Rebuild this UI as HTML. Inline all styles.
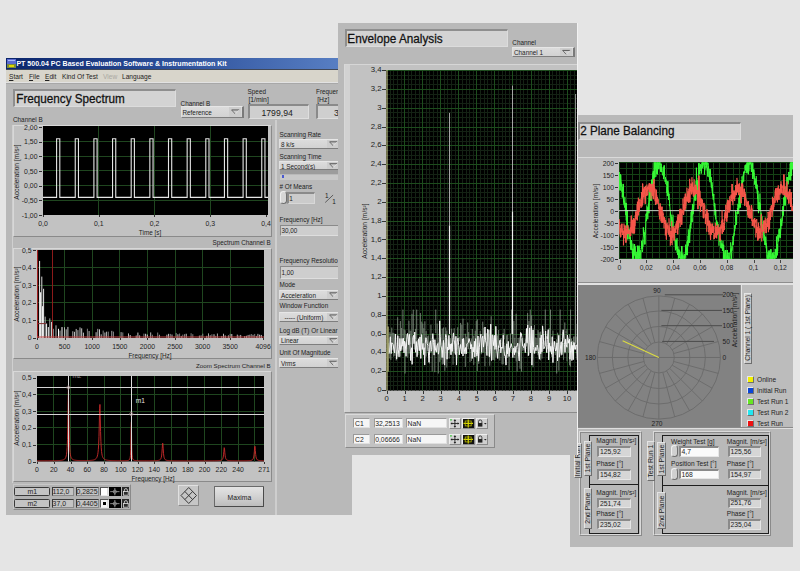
<!DOCTYPE html>
<html><head><meta charset="utf-8"><style>
html,body{margin:0;padding:0;}
body{width:800px;height:571px;overflow:hidden;position:relative;background:#e5e5e5;font-family:"Liberation Sans", sans-serif;}
.a{position:absolute;display:block;}
.t{position:absolute;white-space:nowrap;font-family:"Liberation Sans", sans-serif;}
u{text-decoration-thickness:0.7px;text-underline-offset:0.8px;}
</style></head><body>
<div class="a" style="left:6px;top:58px;width:346px;height:457px;background:#b9b9b9;"></div>
<div class="a" style="left:6px;top:58px;width:346px;height:11px;background:linear-gradient(90deg,#0a246a 0%,#2a4d98 45%,#5b82c6 100%);"></div>
<div class="a" style="left:7px;top:59px;width:9px;height:5px;background:#5a6ad0;"></div>
<div class="a" style="left:8px;top:60px;width:7px;height:1px;background:#a8b8f8;"></div>
<div class="a" style="left:7px;top:64px;width:9px;height:4px;background:#7c8a3a;"></div>
<div class="a" style="left:9px;top:65px;width:5px;height:2px;background:#dcd800;"></div>
<div class="t" style="left:16.40px;top:60.09px;font-size:7.05px;line-height:8.100px;color:#ffffff;font-weight:bold;">PT 500.04 PC Based Evaluation Software &amp; Instrumentation Kit</div>
<div class="a" style="left:6px;top:69px;width:346px;height:1px;background:#404858;"></div>
<div class="a" style="left:6px;top:70px;width:346px;height:12px;background:#d8d5cb;"></div>
<div class="t" style="left:9.00px;top:73.25px;font-size:6.6px;line-height:7.583px;color:#222;text-decoration-thickness:0.6px;"><u>S</u>tart</div>
<div class="t" style="left:29.00px;top:73.25px;font-size:6.6px;line-height:7.583px;color:#222;"><u>F</u>ile</div>
<div class="t" style="left:45.00px;top:73.25px;font-size:6.6px;line-height:7.583px;color:#222;"><u>E</u>dit</div>
<div class="t" style="left:62.00px;top:73.25px;font-size:6.6px;line-height:7.583px;color:#222;">Kind Of Test</div>
<div class="t" style="left:103.00px;top:73.25px;font-size:6.6px;line-height:7.583px;color:#aaa8a2;">View</div>
<div class="t" style="left:122.00px;top:73.25px;font-size:6.6px;line-height:7.583px;color:#222;">Language</div>
<div class="a" style="left:6px;top:82px;width:346px;height:1px;background:#e2e2e2;"></div>
<div class="a" style="left:6px;top:83px;width:346px;height:1px;background:#a8a8a8;"></div>
<div class="a" style="left:13px;top:89px;width:163px;height:17.5px;background:#d3d3d3;box-sizing:border-box;border-top:1px solid #8e8e8e;border-left:1px solid #8e8e8e;border-bottom:1px solid #dcdcdc;border-right:1px solid #dcdcdc;border-top-width:2px;border-left-width:2px;"></div>
<div class="t" style="left:16.30px;top:92.49px;font-size:11.7px;line-height:13.443px;color:#111;transform:scaleY(1.1);-webkit-text-stroke:0.25px #111;">Frequency Spectrum</div>
<div class="t" style="left:180.60px;top:99.69px;font-size:6.35px;line-height:7.296px;color:#1e1e1e;">Channel B</div>
<div class="a" style="left:180.5px;top:106px;width:63px;height:11.7px;box-sizing:border-box;background:linear-gradient(180deg,#dcdcdc,#d2d2d2);border-top:1px solid #e6e6e6;border-left:1px solid #e0e0e0;border-bottom:1px solid #7e7e7e;border-right:2px solid #7a7a7a;"></div>
<div class="a" style="left:229.0px;top:107px;width:12px;height:9.7px;background:#cdcdcd;"></div>
<svg class="a" style="left:229.0px;top:106px;" width="12" height="11.7" viewBox="0 0 12 11.7"><path d="M2.6 3.95 H10.2" stroke="#555" stroke-width="1"/><path d="M2.6 3.95 L6.3 8.05" stroke="#666" stroke-width="0.9"/><path d="M10.2 3.95 L6.3 8.05" stroke="#e2e2e2" stroke-width="0.8"/></svg>
<div class="t" style="left:182.50px;top:108.74px;font-size:6.35px;line-height:7.296px;color:#1e1e1e;">Reference</div>
<div class="t" style="left:247.60px;top:88.39px;font-size:6.35px;line-height:7.296px;color:#1e1e1e;">Speed</div>
<div class="t" style="left:248.40px;top:96.04px;font-size:6.8px;line-height:7.813px;color:#1e1e1e;">[1/min]</div>
<div class="a" style="left:247.5px;top:104.3px;width:61px;height:15px;background:#cfcfcf;box-sizing:border-box;border-top:1px solid #8a8a8a;border-left:1px solid #8a8a8a;border-bottom:1px solid #dedede;border-right:1px solid #dedede;border-top-width:2px;border-left-width:2px;"></div>
<div class="t" style="left:247.10px;width:60px;text-align:center;top:107.87px;font-size:8.7px;line-height:9.996px;color:#222;">1799,94</div>
<div class="t" style="left:316.00px;top:88.39px;font-size:6.35px;line-height:7.296px;color:#1e1e1e;">Frequen</div>
<div class="t" style="left:317.20px;top:96.04px;font-size:6.8px;line-height:7.813px;color:#1e1e1e;">[Hz]</div>
<div class="a" style="left:316px;top:104.3px;width:40px;height:15px;background:#cfcfcf;box-sizing:border-box;border-top:1px solid #8a8a8a;border-left:1px solid #8a8a8a;border-bottom:1px solid #dedede;border-right:1px solid #dedede;border-top-width:2px;border-left-width:2px;"></div>
<div class="t" style="left:334.00px;top:107.87px;font-size:8.7px;line-height:9.996px;color:#222;">3</div>
<div class="a" style="left:12px;top:124.5px;width:1px;height:358px;background:#d0d0d0;"></div>
<div class="a" style="left:13px;top:124.5px;width:258.5px;height:112px;background:#c2c2c2;box-sizing:border-box;border-top:1px solid #d8d8d8;border-left:1px solid #d8d8d8;border-bottom:1px solid #8a8a8a;border-right:1px solid #8a8a8a;"></div>
<svg class="a" style="left:43px;top:126px;" width="225" height="89" viewBox="0 0 225 89"><rect width="225" height="89" fill="#000"/><line x1="0" x2="225" y1="15.50" y2="15.50" stroke="#1f461f" stroke-width="1"/><line x1="0" x2="225" y1="30.50" y2="30.50" stroke="#1f461f" stroke-width="1"/><line x1="0" x2="225" y1="44.50" y2="44.50" stroke="#1f461f" stroke-width="1"/><line x1="0" x2="225" y1="59.50" y2="59.50" stroke="#1f461f" stroke-width="1"/><line x1="0" x2="225" y1="74.50" y2="74.50" stroke="#1f461f" stroke-width="1"/><line y1="0" y2="89" x1="55.50" x2="55.50" stroke="#1f461f" stroke-width="1"/><line y1="0" y2="89" x1="111.50" x2="111.50" stroke="#1f461f" stroke-width="1"/><line y1="0" y2="89" x1="167.50" x2="167.50" stroke="#1f461f" stroke-width="1"/><path d="M0.00 71.39 L13.60 71.39 L13.60 12.73 L16.80 12.73 L16.80 71.39 L32.25 71.39 L32.25 12.73 L35.45 12.73 L35.45 71.39 L50.90 71.39 L50.90 12.73 L54.10 12.73 L54.10 71.39 L69.55 71.39 L69.55 12.73 L72.75 12.73 L72.75 71.39 L88.20 71.39 L88.20 12.73 L91.40 12.73 L91.40 71.39 L106.85 71.39 L106.85 12.73 L110.05 12.73 L110.05 71.39 L125.50 71.39 L125.50 12.73 L128.70 12.73 L128.70 71.39 L144.15 71.39 L144.15 12.73 L147.35 12.73 L147.35 71.39 L162.80 71.39 L162.80 12.73 L166.00 12.73 L166.00 71.39 L181.45 71.39 L181.45 12.73 L184.65 12.73 L184.65 71.39 L200.10 71.39 L200.10 12.73 L203.30 12.73 L203.30 71.39 L218.75 71.39 L218.75 12.73 L221.95 12.73 L221.95 71.39 L225.00 71.39" fill="none" stroke="#e6e6e6" stroke-width="1.1"/></svg>
<div class="t" style="left:7.50px;width:30px;text-align:right;top:123.58px;font-size:6.9px;line-height:7.928px;color:#1e1e1e;">2,00</div>
<div class="a" style="left:38.5px;top:127px;width:3px;height:1px;background:#333;"></div>
<div class="t" style="left:7.50px;width:30px;text-align:right;top:138.24px;font-size:6.9px;line-height:7.928px;color:#1e1e1e;">1,50</div>
<div class="a" style="left:38.5px;top:142px;width:3px;height:1px;background:#333;"></div>
<div class="t" style="left:7.50px;width:30px;text-align:right;top:152.91px;font-size:6.9px;line-height:7.928px;color:#1e1e1e;">1,00</div>
<div class="a" style="left:38.5px;top:156px;width:3px;height:1px;background:#333;"></div>
<div class="t" style="left:7.50px;width:30px;text-align:right;top:167.57px;font-size:6.9px;line-height:7.928px;color:#1e1e1e;">0,50</div>
<div class="a" style="left:38.5px;top:171px;width:3px;height:1px;background:#333;"></div>
<div class="t" style="left:7.50px;width:30px;text-align:right;top:182.24px;font-size:6.9px;line-height:7.928px;color:#1e1e1e;">0,00</div>
<div class="a" style="left:38.5px;top:186px;width:3px;height:1px;background:#333;"></div>
<div class="t" style="left:7.50px;width:30px;text-align:right;top:196.90px;font-size:6.9px;line-height:7.928px;color:#1e1e1e;">-0,50</div>
<div class="a" style="left:38.5px;top:200px;width:3px;height:1px;background:#333;"></div>
<div class="t" style="left:7.50px;width:30px;text-align:right;top:211.57px;font-size:6.9px;line-height:7.928px;color:#1e1e1e;">-1,00</div>
<div class="a" style="left:38.5px;top:215px;width:3px;height:1px;background:#333;"></div>
<div class="t" style="left:28.00px;width:30px;text-align:center;top:219.88px;font-size:6.9px;line-height:7.928px;color:#1e1e1e;">0,0</div>
<div class="a" style="left:43px;top:215px;width:1px;height:2px;background:#333;"></div>
<div class="t" style="left:83.75px;width:30px;text-align:center;top:219.88px;font-size:6.9px;line-height:7.928px;color:#1e1e1e;">0,1</div>
<div class="a" style="left:99px;top:215px;width:1px;height:2px;background:#333;"></div>
<div class="t" style="left:139.50px;width:30px;text-align:center;top:219.88px;font-size:6.9px;line-height:7.928px;color:#1e1e1e;">0,2</div>
<div class="a" style="left:154px;top:215px;width:1px;height:2px;background:#333;"></div>
<div class="t" style="left:195.25px;width:30px;text-align:center;top:219.88px;font-size:6.9px;line-height:7.928px;color:#1e1e1e;">0,3</div>
<div class="a" style="left:210px;top:215px;width:1px;height:2px;background:#333;"></div>
<div class="t" style="left:251.00px;width:30px;text-align:center;top:219.88px;font-size:6.9px;line-height:7.928px;color:#1e1e1e;">0,4</div>
<div class="a" style="left:266px;top:215px;width:1px;height:2px;background:#333;"></div>
<div class="t" style="left:120.00px;width:60px;text-align:center;top:228.89px;font-size:6.35px;line-height:7.296px;color:#1e1e1e;">Time [s]</div>
<div class="t" style="left:13.00px;top:115.59px;font-size:6.35px;line-height:7.296px;color:#1e1e1e;">Channel B</div>
<div class="t" style="left:-83.20px;top:168.28px;width:200px;text-align:center;font-size:6.7px;line-height:8.04px;color:#1e1e1e;transform:rotate(-90deg);transform-origin:100px 4.02px;">Acceleration [m/s&#178;]</div>
<div class="a" style="left:275px;top:120px;width:2px;height:395px;background:#cecece;"></div>
<div class="t" style="left:150.70px;width:120px;text-align:right;top:238.52px;font-size:6.3px;line-height:7.239px;color:#1e1e1e;">Spectrum Channel  B</div>
<div class="a" style="left:13px;top:247.5px;width:258.5px;height:111px;background:#c2c2c2;box-sizing:border-box;border-top:1px solid #d8d8d8;border-left:1px solid #d8d8d8;border-bottom:1px solid #8a8a8a;border-right:1px solid #8a8a8a;"></div>
<svg class="a" style="left:37px;top:250px;" width="227" height="88" viewBox="0 0 227 88"><rect width="227" height="88" fill="#000"/><line x1="0" x2="227" y1="70.50" y2="70.50" stroke="#1f461f" stroke-width="1"/><line x1="0" x2="227" y1="52.50" y2="52.50" stroke="#1f461f" stroke-width="1"/><line x1="0" x2="227" y1="35.50" y2="35.50" stroke="#1f461f" stroke-width="1"/><line x1="0" x2="227" y1="17.50" y2="17.50" stroke="#1f461f" stroke-width="1"/><line y1="0" y2="88" x1="27.50" x2="27.50" stroke="#1f461f" stroke-width="1"/><line y1="0" y2="88" x1="55.50" x2="55.50" stroke="#1f461f" stroke-width="1"/><line y1="0" y2="88" x1="82.50" x2="82.50" stroke="#1f461f" stroke-width="1"/><line y1="0" y2="88" x1="110.50" x2="110.50" stroke="#1f461f" stroke-width="1"/><line y1="0" y2="88" x1="138.50" x2="138.50" stroke="#1f461f" stroke-width="1"/><line y1="0" y2="88" x1="165.50" x2="165.50" stroke="#1f461f" stroke-width="1"/><line y1="0" y2="88" x1="193.50" x2="193.50" stroke="#1f461f" stroke-width="1"/><line x1="2.6" x2="2.6" y1="88" y2="10.94" stroke="#f0f0f0" stroke-width="1"/><line x1="4.8" x2="4.8" y1="88" y2="26.60" stroke="#dcdcdc" stroke-width="1"/><line x1="6.6" x2="6.6" y1="88" y2="38.78" stroke="#e8e8e8" stroke-width="1"/><line x1="3.6" x2="3.6" y1="88" y2="42.26" stroke="#ffffff" stroke-width="1"/><line x1="5.6" x2="5.6" y1="88" y2="56.18" stroke="#ffffff" stroke-width="1"/><line x1="8.2" x2="8.2" y1="88" y2="66.62" stroke="#b0b0b0" stroke-width="1"/><line x1="9.6" x2="9.6" y1="88" y2="73.58" stroke="#ffffff" stroke-width="1"/><line x1="12.8" x2="12.8" y1="88" y2="68.36" stroke="#a8a8a8" stroke-width="1"/><line x1="14.5" x2="14.5" y1="88" y2="71.84" stroke="#c8c8c8" stroke-width="1"/><line x1="11.3" x2="11.3" y1="88" y2="77.06" stroke="#ffffff" stroke-width="1"/><line x1="16" x2="16" y1="88" y2="78.80" stroke="#ffffff" stroke-width="1"/><line x1="19" x2="19" y1="88" y2="75.32" stroke="#bbbbbb" stroke-width="1"/><line x1="21.5" x2="21.5" y1="88" y2="78.80" stroke="#ffffff" stroke-width="1"/><line x1="23" x2="23" y1="88" y2="80.54" stroke="#aaaaaa" stroke-width="1"/><line x1="25" x2="25" y1="88" y2="77.06" stroke="#ffffff" stroke-width="1"/><line x1="27.5" x2="27.5" y1="88" y2="77.24" stroke="#d8d8d8" stroke-width="0.8"/><line x1="29.2" x2="29.2" y1="88" y2="79.33" stroke="#e8e8e8" stroke-width="0.8"/><line x1="30.9" x2="30.9" y1="88" y2="76.93" stroke="#ffffff" stroke-width="0.8"/><line x1="35.8" x2="35.8" y1="88" y2="81.25" stroke="#d8d8d8" stroke-width="0.8"/><line x1="37.5" x2="37.5" y1="88" y2="81.81" stroke="#e8e8e8" stroke-width="0.8"/><line x1="39.2" x2="39.2" y1="88" y2="78.94" stroke="#e8e8e8" stroke-width="0.8"/><line x1="40.9" x2="40.9" y1="88" y2="80.12" stroke="#d8d8d8" stroke-width="0.8"/><line x1="43.0" x2="43.0" y1="88" y2="77.40" stroke="#e8e8e8" stroke-width="0.8"/><line x1="44.7" x2="44.7" y1="88" y2="78.34" stroke="#ffffff" stroke-width="0.8"/><line x1="46.4" x2="46.4" y1="88" y2="82.63" stroke="#ffffff" stroke-width="0.8"/><line x1="50.4" x2="50.4" y1="88" y2="78.71" stroke="#a0a0a0" stroke-width="0.8"/><line x1="52.1" x2="52.1" y1="88" y2="81.04" stroke="#e8e8e8" stroke-width="0.8"/><line x1="59.1" x2="59.1" y1="88" y2="82.20" stroke="#e8e8e8" stroke-width="0.8"/><line x1="60.8" x2="60.8" y1="88" y2="78.83" stroke="#d8d8d8" stroke-width="0.8"/><line x1="62.5" x2="62.5" y1="88" y2="79.34" stroke="#ffffff" stroke-width="0.8"/><line x1="64.2" x2="64.2" y1="88" y2="84.33" stroke="#e8e8e8" stroke-width="0.8"/><line x1="66.2" x2="66.2" y1="88" y2="80.57" stroke="#a0a0a0" stroke-width="0.8"/><line x1="67.9" x2="67.9" y1="88" y2="82.51" stroke="#e8e8e8" stroke-width="0.8"/><line x1="69.6" x2="69.6" y1="88" y2="81.68" stroke="#e8e8e8" stroke-width="0.8"/><line x1="71.3" x2="71.3" y1="88" y2="81.63" stroke="#a0a0a0" stroke-width="0.8"/><line x1="74.8" x2="74.8" y1="88" y2="80.83" stroke="#d8d8d8" stroke-width="0.8"/><line x1="76.5" x2="76.5" y1="88" y2="81.61" stroke="#a0a0a0" stroke-width="0.8"/><line x1="84.1" x2="84.1" y1="88" y2="82.09" stroke="#d8d8d8" stroke-width="0.8"/><line x1="85.8" x2="85.8" y1="88" y2="82.45" stroke="#a0a0a0" stroke-width="0.8"/><line x1="91.5" x2="91.5" y1="88" y2="83.41" stroke="#e8e8e8" stroke-width="0.8"/><line x1="93.2" x2="93.2" y1="88" y2="85.05" stroke="#ffffff" stroke-width="0.8"/><line x1="99.2" x2="99.2" y1="88" y2="85.47" stroke="#e8e8e8" stroke-width="0.8"/><line x1="100.9" x2="100.9" y1="88" y2="82.55" stroke="#ffffff" stroke-width="0.8"/><line x1="102.6" x2="102.6" y1="88" y2="85.38" stroke="#ffffff" stroke-width="0.8"/><line x1="106.9" x2="106.9" y1="88" y2="83.63" stroke="#a0a0a0" stroke-width="0.8"/><line x1="108.6" x2="108.6" y1="88" y2="83.79" stroke="#ffffff" stroke-width="0.8"/><line x1="110.3" x2="110.3" y1="88" y2="84.52" stroke="#ffffff" stroke-width="0.8"/><line x1="113.7" x2="113.7" y1="88" y2="82.40" stroke="#e8e8e8" stroke-width="0.8"/><line x1="115.4" x2="115.4" y1="88" y2="84.71" stroke="#a0a0a0" stroke-width="0.8"/><line x1="120.7" x2="120.7" y1="88" y2="82.51" stroke="#a0a0a0" stroke-width="0.8"/><line x1="122.4" x2="122.4" y1="88" y2="84.75" stroke="#d8d8d8" stroke-width="0.8"/><line x1="129.9" x2="129.9" y1="88" y2="84.68" stroke="#e8e8e8" stroke-width="0.8"/><line x1="131.6" x2="131.6" y1="88" y2="83.82" stroke="#ffffff" stroke-width="0.8"/><line x1="133.3" x2="133.3" y1="88" y2="83.90" stroke="#a0a0a0" stroke-width="0.8"/><line x1="135.0" x2="135.0" y1="88" y2="84.51" stroke="#d8d8d8" stroke-width="0.8"/><line x1="139.2" x2="139.2" y1="88" y2="82.95" stroke="#a0a0a0" stroke-width="0.8"/><line x1="140.9" x2="140.9" y1="88" y2="84.27" stroke="#ffffff" stroke-width="0.8"/><line x1="142.6" x2="142.6" y1="88" y2="83.53" stroke="#a0a0a0" stroke-width="0.8"/><line x1="144.3" x2="144.3" y1="88" y2="85.90" stroke="#d8d8d8" stroke-width="0.8"/><line x1="145.8" x2="145.8" y1="88" y2="84.60" stroke="#a0a0a0" stroke-width="0.8"/><line x1="147.5" x2="147.5" y1="88" y2="84.17" stroke="#a0a0a0" stroke-width="0.8"/><line x1="149.2" x2="149.2" y1="88" y2="83.78" stroke="#ffffff" stroke-width="0.8"/><line x1="154.1" x2="154.1" y1="88" y2="83.23" stroke="#a0a0a0" stroke-width="0.8"/><line x1="155.8" x2="155.8" y1="88" y2="84.21" stroke="#a0a0a0" stroke-width="0.8"/><line x1="162.4" x2="162.4" y1="88" y2="85.57" stroke="#d8d8d8" stroke-width="0.8"/><line x1="164.1" x2="164.1" y1="88" y2="85.18" stroke="#a0a0a0" stroke-width="0.8"/><line x1="165.8" x2="165.8" y1="88" y2="83.67" stroke="#a0a0a0" stroke-width="0.8"/><line x1="169.8" x2="169.8" y1="88" y2="85.81" stroke="#ffffff" stroke-width="0.8"/><line x1="171.5" x2="171.5" y1="88" y2="83.38" stroke="#d8d8d8" stroke-width="0.8"/><line x1="173.2" x2="173.2" y1="88" y2="85.23" stroke="#d8d8d8" stroke-width="0.8"/><line x1="174.9" x2="174.9" y1="88" y2="84.27" stroke="#a0a0a0" stroke-width="0.8"/><line x1="177.0" x2="177.0" y1="88" y2="84.26" stroke="#ffffff" stroke-width="0.8"/><line x1="178.7" x2="178.7" y1="88" y2="85.84" stroke="#a0a0a0" stroke-width="0.8"/><line x1="180.4" x2="180.4" y1="88" y2="83.51" stroke="#d8d8d8" stroke-width="0.8"/><line x1="184.8" x2="184.8" y1="88" y2="85.93" stroke="#d8d8d8" stroke-width="0.8"/><line x1="186.5" x2="186.5" y1="88" y2="83.74" stroke="#e8e8e8" stroke-width="0.8"/><line x1="188.2" x2="188.2" y1="88" y2="85.41" stroke="#ffffff" stroke-width="0.8"/><line x1="191.4" x2="191.4" y1="88" y2="85.31" stroke="#d8d8d8" stroke-width="0.8"/><line x1="193.1" x2="193.1" y1="88" y2="83.84" stroke="#a0a0a0" stroke-width="0.8"/><line x1="194.8" x2="194.8" y1="88" y2="83.99" stroke="#ffffff" stroke-width="0.8"/><line x1="200.3" x2="200.3" y1="88" y2="84.61" stroke="#e8e8e8" stroke-width="0.8"/><line x1="202.0" x2="202.0" y1="88" y2="85.40" stroke="#a0a0a0" stroke-width="0.8"/><line x1="203.7" x2="203.7" y1="88" y2="84.94" stroke="#e8e8e8" stroke-width="0.8"/><line x1="207.7" x2="207.7" y1="88" y2="86.09" stroke="#e8e8e8" stroke-width="0.8"/><line x1="209.4" x2="209.4" y1="88" y2="85.77" stroke="#ffffff" stroke-width="0.8"/><line x1="211.1" x2="211.1" y1="88" y2="84.93" stroke="#e8e8e8" stroke-width="0.8"/><line x1="212.8" x2="212.8" y1="88" y2="84.71" stroke="#d8d8d8" stroke-width="0.8"/><line x1="214.3" x2="214.3" y1="88" y2="84.01" stroke="#a0a0a0" stroke-width="0.8"/><line x1="216.0" x2="216.0" y1="88" y2="84.77" stroke="#d8d8d8" stroke-width="0.8"/><line x1="217.7" x2="217.7" y1="88" y2="83.94" stroke="#a0a0a0" stroke-width="0.8"/><line x1="219.4" x2="219.4" y1="88" y2="85.88" stroke="#d8d8d8" stroke-width="0.8"/><line x1="220.9" x2="220.9" y1="88" y2="83.87" stroke="#e8e8e8" stroke-width="0.8"/><line x1="222.6" x2="222.6" y1="88" y2="84.70" stroke="#ffffff" stroke-width="0.8"/><line x1="224.3" x2="224.3" y1="88" y2="84.95" stroke="#ffffff" stroke-width="0.8"/><line x1="0.5" x2="0.5" y1="0" y2="88" stroke="#a02020" stroke-width="1.2"/><line x1="15.5" x2="15.5" y1="0" y2="88" stroke="#8c1a1a" stroke-width="1"/><line x1="0" x2="227" y1="87" y2="87" stroke="#c84848" stroke-width="1"/><line x1="1" x2="9" y1="73.6" y2="73.6" stroke="#803030" stroke-width="1"/></svg>
<div class="t" style="left:1.50px;width:30px;text-align:right;top:247.08px;font-size:6.9px;line-height:7.928px;color:#1e1e1e;">0,5</div>
<div class="a" style="left:32.5px;top:250px;width:3px;height:1px;background:#333;"></div>
<div class="t" style="left:1.50px;width:30px;text-align:right;top:264.48px;font-size:6.9px;line-height:7.928px;color:#1e1e1e;">0,4</div>
<div class="a" style="left:32.5px;top:268px;width:3px;height:1px;background:#333;"></div>
<div class="t" style="left:1.50px;width:30px;text-align:right;top:281.88px;font-size:6.9px;line-height:7.928px;color:#1e1e1e;">0,3</div>
<div class="a" style="left:32.5px;top:285px;width:3px;height:1px;background:#333;"></div>
<div class="t" style="left:1.50px;width:30px;text-align:right;top:299.28px;font-size:6.9px;line-height:7.928px;color:#1e1e1e;">0,2</div>
<div class="a" style="left:32.5px;top:303px;width:3px;height:1px;background:#333;"></div>
<div class="t" style="left:1.50px;width:30px;text-align:right;top:316.68px;font-size:6.9px;line-height:7.928px;color:#1e1e1e;">0,1</div>
<div class="a" style="left:32.5px;top:320px;width:3px;height:1px;background:#333;"></div>
<div class="t" style="left:1.50px;width:30px;text-align:right;top:334.08px;font-size:6.9px;line-height:7.928px;color:#1e1e1e;">0</div>
<div class="a" style="left:32.5px;top:338px;width:3px;height:1px;background:#333;"></div>
<div class="t" style="left:17.00px;width:40px;text-align:center;top:342.58px;font-size:6.9px;line-height:7.928px;color:#1e1e1e;">0</div>
<div class="a" style="left:37px;top:338px;width:1px;height:2px;background:#333;"></div>
<div class="t" style="left:44.60px;width:40px;text-align:center;top:342.58px;font-size:6.9px;line-height:7.928px;color:#1e1e1e;">500</div>
<div class="a" style="left:65px;top:338px;width:1px;height:2px;background:#333;"></div>
<div class="t" style="left:72.20px;width:40px;text-align:center;top:342.58px;font-size:6.9px;line-height:7.928px;color:#1e1e1e;">1000</div>
<div class="a" style="left:92px;top:338px;width:1px;height:2px;background:#333;"></div>
<div class="t" style="left:99.80px;width:40px;text-align:center;top:342.58px;font-size:6.9px;line-height:7.928px;color:#1e1e1e;">1500</div>
<div class="a" style="left:120px;top:338px;width:1px;height:2px;background:#333;"></div>
<div class="t" style="left:127.40px;width:40px;text-align:center;top:342.58px;font-size:6.9px;line-height:7.928px;color:#1e1e1e;">2000</div>
<div class="a" style="left:147px;top:338px;width:1px;height:2px;background:#333;"></div>
<div class="t" style="left:155.00px;width:40px;text-align:center;top:342.58px;font-size:6.9px;line-height:7.928px;color:#1e1e1e;">2500</div>
<div class="a" style="left:175px;top:338px;width:1px;height:2px;background:#333;"></div>
<div class="t" style="left:182.60px;width:40px;text-align:center;top:342.58px;font-size:6.9px;line-height:7.928px;color:#1e1e1e;">3000</div>
<div class="a" style="left:203px;top:338px;width:1px;height:2px;background:#333;"></div>
<div class="t" style="left:210.20px;width:40px;text-align:center;top:342.58px;font-size:6.9px;line-height:7.928px;color:#1e1e1e;">3500</div>
<div class="a" style="left:230px;top:338px;width:1px;height:2px;background:#333;"></div>
<div class="t" style="left:243.10px;width:40px;text-align:center;top:342.58px;font-size:6.9px;line-height:7.928px;color:#1e1e1e;">4096</div>
<div class="a" style="left:263px;top:338px;width:1px;height:2px;background:#333;"></div>
<div class="t" style="left:110.00px;width:80px;text-align:center;top:351.89px;font-size:6.35px;line-height:7.296px;color:#1e1e1e;">Frequency [Hz]</div>
<div class="t" style="left:-83.20px;top:289.98px;width:200px;text-align:center;font-size:6.7px;line-height:8.04px;color:#1e1e1e;transform:rotate(-90deg);transform-origin:100px 4.02px;">Acceleration [m/s&#178;]</div>
<div class="t" style="left:130.70px;width:140px;text-align:right;top:361.77px;font-size:6.2px;line-height:7.124px;color:#1e1e1e;">Zoom Spectrum Channel B</div>
<div class="a" style="left:13px;top:371px;width:258.5px;height:111px;background:#c2c2c2;box-sizing:border-box;border-top:1px solid #d8d8d8;border-left:1px solid #d8d8d8;border-bottom:1px solid #8a8a8a;border-right:1px solid #8a8a8a;"></div>
<svg class="a" style="left:37px;top:376px;" width="227" height="85.5" viewBox="0 0 227 85.5"><rect width="227" height="85.5" fill="#000"/><line x1="0" x2="227" y1="68.50" y2="68.50" stroke="#1f461f" stroke-width="1"/><line x1="0" x2="227" y1="51.50" y2="51.50" stroke="#1f461f" stroke-width="1"/><line x1="0" x2="227" y1="35.50" y2="35.50" stroke="#1f461f" stroke-width="1"/><line x1="0" x2="227" y1="18.50" y2="18.50" stroke="#1f461f" stroke-width="1"/><line y1="0" y2="85.5" x1="16.50" x2="16.50" stroke="#1f461f" stroke-width="1"/><line y1="0" y2="85.5" x1="33.50" x2="33.50" stroke="#1f461f" stroke-width="1"/><line y1="0" y2="85.5" x1="50.50" x2="50.50" stroke="#1f461f" stroke-width="1"/><line y1="0" y2="85.5" x1="67.50" x2="67.50" stroke="#1f461f" stroke-width="1"/><line y1="0" y2="85.5" x1="83.50" x2="83.50" stroke="#1f461f" stroke-width="1"/><line y1="0" y2="85.5" x1="100.50" x2="100.50" stroke="#1f461f" stroke-width="1"/><line y1="0" y2="85.5" x1="117.50" x2="117.50" stroke="#1f461f" stroke-width="1"/><line y1="0" y2="85.5" x1="134.50" x2="134.50" stroke="#1f461f" stroke-width="1"/><line y1="0" y2="85.5" x1="150.50" x2="150.50" stroke="#1f461f" stroke-width="1"/><line y1="0" y2="85.5" x1="167.50" x2="167.50" stroke="#1f461f" stroke-width="1"/><line y1="0" y2="85.5" x1="184.50" x2="184.50" stroke="#1f461f" stroke-width="1"/><line y1="0" y2="85.5" x1="201.50" x2="201.50" stroke="#1f461f" stroke-width="1"/><line y1="0" y2="85.5" x1="217.50" x2="217.50" stroke="#1f461f" stroke-width="1"/><path d="M0.00 84.79 L0.32 84.79 L0.65 84.79 L0.97 84.79 L1.30 84.79 L1.62 84.79 L1.95 84.79 L2.27 84.79 L2.60 84.79 L2.92 84.79 L3.24 84.79 L3.57 84.78 L3.89 84.78 L4.22 84.78 L4.54 84.78 L4.87 84.78 L5.19 84.78 L5.52 84.78 L5.84 84.78 L6.16 84.78 L6.49 84.78 L6.81 84.77 L7.14 84.77 L7.46 84.77 L7.79 84.77 L8.11 84.77 L8.44 84.77 L8.76 84.77 L9.08 84.76 L9.41 84.76 L9.73 84.76 L10.06 84.76 L10.38 84.76 L10.71 84.76 L11.03 84.75 L11.35 84.75 L11.68 84.75 L12.00 84.75 L12.33 84.74 L12.65 84.74 L12.98 84.74 L13.30 84.74 L13.63 84.73 L13.95 84.73 L14.27 84.73 L14.60 84.72 L14.92 84.72 L15.25 84.71 L15.57 84.71 L15.90 84.71 L16.22 84.70 L16.55 84.70 L16.87 84.69 L17.19 84.69 L17.52 84.68 L17.84 84.67 L18.17 84.67 L18.49 84.66 L18.82 84.65 L19.14 84.64 L19.47 84.63 L19.79 84.62 L20.11 84.61 L20.44 84.60 L20.76 84.58 L21.09 84.57 L21.41 84.55 L21.74 84.54 L22.06 84.52 L22.39 84.50 L22.71 84.47 L23.03 84.45 L23.36 84.42 L23.68 84.38 L24.01 84.35 L24.33 84.30 L24.66 84.25 L24.98 84.20 L25.31 84.13 L25.63 84.05 L25.95 83.96 L26.28 83.85 L26.60 83.72 L26.93 83.56 L27.25 83.37 L27.58 83.12 L27.90 82.81 L28.23 82.40 L28.55 81.84 L28.87 81.09 L29.20 80.00 L29.52 78.38 L29.85 75.82 L30.17 71.51 L30.50 63.72 L30.82 48.95 L31.14 24.60 L31.47 11.29 L31.79 31.81 L32.12 53.94 L32.44 66.35 L32.77 72.93 L33.09 76.64 L33.42 78.88 L33.74 80.33 L34.06 81.31 L34.39 82.00 L34.71 82.50 L35.04 82.88 L35.36 83.18 L35.69 83.41 L36.01 83.59 L36.34 83.74 L36.66 83.86 L36.98 83.96 L37.31 84.05 L37.63 84.12 L37.96 84.18 L38.28 84.23 L38.61 84.28 L38.93 84.32 L39.26 84.35 L39.58 84.38 L39.90 84.41 L40.23 84.43 L40.55 84.46 L40.88 84.47 L41.20 84.49 L41.53 84.51 L41.85 84.52 L42.18 84.53 L42.50 84.54 L42.82 84.55 L43.15 84.56 L43.47 84.56 L43.80 84.57 L44.12 84.57 L44.45 84.58 L44.77 84.58 L45.10 84.59 L45.42 84.59 L45.74 84.59 L46.07 84.59 L46.39 84.59 L46.72 84.59 L47.04 84.59 L47.37 84.59 L47.69 84.59 L48.02 84.58 L48.34 84.58 L48.66 84.58 L48.99 84.57 L49.31 84.57 L49.64 84.56 L49.96 84.56 L50.29 84.55 L50.61 84.54 L50.93 84.53 L51.26 84.52 L51.58 84.51 L51.91 84.49 L52.23 84.48 L52.56 84.46 L52.88 84.44 L53.21 84.42 L53.53 84.40 L53.85 84.37 L54.18 84.35 L54.50 84.31 L54.83 84.28 L55.15 84.23 L55.48 84.19 L55.80 84.13 L56.13 84.07 L56.45 84.00 L56.77 83.92 L57.10 83.82 L57.42 83.70 L57.75 83.56 L58.07 83.40 L58.40 83.19 L58.72 82.94 L59.05 82.63 L59.37 82.23 L59.69 81.70 L60.02 81.01 L60.34 80.05 L60.67 78.70 L60.99 76.71 L61.32 73.67 L61.64 68.79 L61.97 60.75 L62.29 47.99 L62.61 32.76 L62.94 28.45 L63.26 40.85 L63.59 55.59 L63.91 65.64 L64.24 71.75 L64.56 75.50 L64.89 77.90 L65.21 79.50 L65.53 80.62 L65.86 81.42 L66.18 82.02 L66.51 82.47 L66.83 82.82 L67.16 83.10 L67.48 83.32 L67.80 83.51 L68.13 83.66 L68.45 83.78 L68.78 83.89 L69.10 83.98 L69.43 84.06 L69.75 84.13 L70.08 84.19 L70.40 84.24 L70.72 84.28 L71.05 84.32 L71.37 84.36 L71.70 84.39 L72.02 84.42 L72.35 84.44 L72.67 84.47 L73.00 84.49 L73.32 84.51 L73.64 84.52 L73.97 84.54 L74.29 84.55 L74.62 84.57 L74.94 84.58 L75.27 84.59 L75.59 84.60 L75.92 84.61 L76.24 84.62 L76.56 84.63 L76.89 84.63 L77.21 84.64 L77.54 84.65 L77.86 84.65 L78.19 84.66 L78.51 84.66 L78.84 84.67 L79.16 84.67 L79.48 84.68 L79.81 84.68 L80.13 84.68 L80.46 84.69 L80.78 84.69 L81.11 84.69 L81.43 84.69 L81.76 84.70 L82.08 84.70 L82.40 84.70 L82.73 84.70 L83.05 84.70 L83.38 84.70 L83.70 84.70 L84.03 84.70 L84.35 84.70 L84.68 84.70 L85.00 84.70 L85.32 84.70 L85.65 84.70 L85.97 84.69 L86.30 84.69 L86.62 84.69 L86.95 84.68 L87.27 84.68 L87.59 84.67 L87.92 84.66 L88.24 84.65 L88.57 84.64 L88.89 84.63 L89.22 84.61 L89.54 84.59 L89.87 84.56 L90.19 84.53 L90.51 84.49 L90.84 84.43 L91.16 84.36 L91.49 84.26 L91.81 84.12 L92.14 83.91 L92.46 83.58 L92.79 83.02 L93.11 81.97 L93.43 79.67 L93.76 73.29 L94.08 51.80 L94.41 45.75 L94.73 71.07 L95.06 78.98 L95.38 81.69 L95.71 82.88 L96.03 83.50 L96.35 83.86 L96.68 84.09 L97.00 84.25 L97.33 84.35 L97.65 84.43 L97.98 84.49 L98.30 84.54 L98.63 84.57 L98.95 84.60 L99.27 84.62 L99.60 84.64 L99.92 84.66 L100.25 84.67 L100.57 84.68 L100.90 84.69 L101.22 84.70 L101.55 84.71 L101.87 84.72 L102.19 84.72 L102.52 84.73 L102.84 84.73 L103.17 84.73 L103.49 84.74 L103.82 84.74 L104.14 84.74 L104.47 84.75 L104.79 84.75 L105.11 84.75 L105.44 84.75 L105.76 84.75 L106.09 84.75 L106.41 84.76 L106.74 84.76 L107.06 84.76 L107.38 84.76 L107.71 84.76 L108.03 84.76 L108.36 84.76 L108.68 84.76 L109.01 84.76 L109.33 84.76 L109.66 84.76 L109.98 84.76 L110.30 84.76 L110.63 84.76 L110.95 84.76 L111.28 84.75 L111.60 84.75 L111.93 84.75 L112.25 84.75 L112.58 84.75 L112.90 84.75 L113.22 84.75 L113.55 84.74 L113.87 84.74 L114.20 84.74 L114.52 84.73 L114.85 84.73 L115.17 84.73 L115.50 84.72 L115.82 84.72 L116.14 84.71 L116.47 84.71 L116.79 84.70 L117.12 84.69 L117.44 84.68 L117.77 84.67 L118.09 84.66 L118.42 84.65 L118.74 84.64 L119.06 84.62 L119.39 84.60 L119.71 84.58 L120.04 84.55 L120.36 84.52 L120.69 84.48 L121.01 84.44 L121.34 84.38 L121.66 84.31 L121.98 84.23 L122.31 84.11 L122.63 83.97 L122.96 83.77 L123.28 83.49 L123.61 83.09 L123.93 82.49 L124.26 81.54 L124.58 79.94 L124.90 77.14 L125.23 72.45 L125.55 67.18 L125.88 67.54 L126.20 72.96 L126.53 77.47 L126.85 80.13 L127.17 81.65 L127.50 82.56 L127.82 83.14 L128.15 83.52 L128.47 83.79 L128.80 83.98 L129.12 84.13 L129.45 84.24 L129.77 84.32 L130.09 84.39 L130.42 84.45 L130.74 84.49 L131.07 84.53 L131.39 84.56 L131.72 84.59 L132.04 84.61 L132.37 84.63 L132.69 84.64 L133.01 84.66 L133.34 84.67 L133.66 84.68 L133.99 84.69 L134.31 84.70 L134.64 84.71 L134.96 84.72 L135.29 84.72 L135.61 84.73 L135.93 84.73 L136.26 84.74 L136.58 84.74 L136.91 84.75 L137.23 84.75 L137.56 84.76 L137.88 84.76 L138.21 84.76 L138.53 84.76 L138.85 84.77 L139.18 84.77 L139.50 84.77 L139.83 84.77 L140.15 84.77 L140.48 84.78 L140.80 84.78 L141.13 84.78 L141.45 84.78 L141.77 84.78 L142.10 84.78 L142.42 84.79 L142.75 84.79 L143.07 84.79 L143.40 84.79 L143.72 84.79 L144.05 84.79 L144.37 84.79 L144.69 84.79 L145.02 84.79 L145.34 84.79 L145.67 84.79 L145.99 84.79 L146.32 84.80 L146.64 84.80 L146.96 84.80 L147.29 84.80 L147.61 84.80 L147.94 84.80 L148.26 84.80 L148.59 84.80 L148.91 84.80 L149.24 84.80 L149.56 84.80 L149.88 84.80 L150.21 84.80 L150.53 84.80 L150.86 84.80 L151.18 84.80 L151.51 84.80 L151.83 84.80 L152.16 84.80 L152.48 84.80 L152.80 84.80 L153.13 84.80 L153.45 84.80 L153.78 84.80 L154.10 84.80 L154.43 84.80 L154.75 84.80 L155.08 84.80 L155.40 84.80 L155.72 84.80 L156.05 84.80 L156.37 84.80 L156.70 84.80 L157.02 84.80 L157.35 84.80 L157.67 84.80 L158.00 84.80 L158.32 84.80 L158.64 84.80 L158.97 84.80 L159.29 84.80 L159.62 84.80 L159.94 84.80 L160.27 84.80 L160.59 84.80 L160.92 84.80 L161.24 84.80 L161.56 84.80 L161.89 84.80 L162.21 84.80 L162.54 84.80 L162.86 84.80 L163.19 84.80 L163.51 84.80 L163.83 84.80 L164.16 84.80 L164.48 84.80 L164.81 84.80 L165.13 84.80 L165.46 84.80 L165.78 84.80 L166.11 84.80 L166.43 84.80 L166.75 84.80 L167.08 84.80 L167.40 84.80 L167.73 84.80 L168.05 84.80 L168.38 84.80 L168.70 84.80 L169.03 84.80 L169.35 84.80 L169.67 84.80 L170.00 84.80 L170.32 84.80 L170.65 84.79 L170.97 84.79 L171.30 84.79 L171.62 84.79 L171.95 84.79 L172.27 84.79 L172.59 84.79 L172.92 84.79 L173.24 84.79 L173.57 84.78 L173.89 84.78 L174.22 84.78 L174.54 84.78 L174.87 84.78 L175.19 84.78 L175.51 84.77 L175.84 84.77 L176.16 84.77 L176.49 84.76 L176.81 84.76 L177.14 84.76 L177.46 84.75 L177.79 84.75 L178.11 84.75 L178.43 84.74 L178.76 84.73 L179.08 84.73 L179.41 84.72 L179.73 84.71 L180.06 84.70 L180.38 84.69 L180.71 84.68 L181.03 84.66 L181.35 84.65 L181.68 84.63 L182.00 84.60 L182.33 84.58 L182.65 84.54 L182.98 84.50 L183.30 84.45 L183.62 84.38 L183.95 84.30 L184.27 84.18 L184.60 84.03 L184.92 83.82 L185.25 83.51 L185.57 83.05 L185.90 82.30 L186.22 81.04 L186.54 78.83 L186.87 75.21 L187.19 71.66 L187.52 72.74 L187.84 76.78 L188.17 79.84 L188.49 81.61 L188.82 82.63 L189.14 83.25 L189.46 83.64 L189.79 83.91 L190.11 84.10 L190.44 84.23 L190.76 84.33 L191.09 84.41 L191.41 84.47 L191.74 84.51 L192.06 84.55 L192.38 84.58 L192.71 84.61 L193.03 84.63 L193.36 84.65 L193.68 84.66 L194.01 84.68 L194.33 84.69 L194.66 84.70 L194.98 84.71 L195.30 84.72 L195.63 84.72 L195.95 84.73 L196.28 84.73 L196.60 84.74 L196.93 84.74 L197.25 84.75 L197.58 84.75 L197.90 84.75 L198.22 84.76 L198.55 84.76 L198.87 84.76 L199.20 84.76 L199.52 84.76 L199.85 84.76 L200.17 84.77 L200.50 84.77 L200.82 84.77 L201.14 84.77 L201.47 84.77 L201.79 84.77 L202.12 84.77 L202.44 84.77 L202.77 84.77 L203.09 84.77 L203.41 84.77 L203.74 84.77 L204.06 84.77 L204.39 84.77 L204.71 84.76 L205.04 84.76 L205.36 84.76 L205.69 84.76 L206.01 84.76 L206.33 84.76 L206.66 84.75 L206.98 84.75 L207.31 84.75 L207.63 84.75 L207.96 84.74 L208.28 84.74 L208.61 84.73 L208.93 84.73 L209.25 84.72 L209.58 84.71 L209.90 84.71 L210.23 84.70 L210.55 84.69 L210.88 84.68 L211.20 84.66 L211.53 84.65 L211.85 84.63 L212.17 84.61 L212.50 84.58 L212.82 84.55 L213.15 84.52 L213.47 84.47 L213.80 84.42 L214.12 84.35 L214.45 84.26 L214.77 84.15 L215.09 83.99 L215.42 83.77 L215.74 83.46 L216.07 83.00 L216.39 82.27 L216.72 81.05 L217.04 78.93 L217.37 75.31 L217.69 70.83 L218.01 70.28 L218.34 74.52 L218.66 78.42 L218.99 80.76 L219.31 82.10 L219.64 82.90 L219.96 83.40 L220.29 83.73 L220.61 83.96 L220.93 84.12 L221.26 84.25 L221.58 84.34 L221.91 84.41 L222.23 84.47 L222.56 84.52 L222.88 84.55 L223.20 84.58 L223.53 84.61 L223.85 84.63 L224.18 84.65 L224.50 84.67 L224.83 84.68 L225.15 84.69 L225.48 84.70 L225.80 84.71 L226.12 84.72 L226.45 84.73 L226.77 84.74 L227.10 84.74" fill="none" stroke="#c42a2a" stroke-width="0.95"/><line x1="0" x2="227" y1="38.5" y2="38.5" stroke="#d4d4d4" stroke-width="1"/><line x1="94.5" x2="94.5" y1="0" y2="85.5" stroke="#dcdcdc" stroke-width="1"/><circle cx="94.3" cy="38.0" r="1.6" fill="none" stroke="#a08080" stroke-width="0.8"/><line x1="0" x2="227" y1="11.5" y2="11.5" stroke="#d4d4d4" stroke-width="1"/><line x1="31.5" x2="31.5" y1="0" y2="85.5" stroke="#dcdcdc" stroke-width="1"/><circle cx="31.4" cy="11.5" r="1.6" fill="none" stroke="#a08080" stroke-width="0.8"/><text x="98.8" y="26.5" font-size="6.5" fill="#e8e8e8" font-family="Liberation Sans">m1</text><text x="35.4" y="1.5" font-size="6.5" fill="#909090" font-family="Liberation Sans">m2</text></svg>
<div class="t" style="left:1.50px;width:30px;text-align:right;top:374.08px;font-size:6.9px;line-height:7.928px;color:#1e1e1e;">0,5</div>
<div class="a" style="left:32.5px;top:378px;width:3px;height:1px;background:#333;"></div>
<div class="t" style="left:1.50px;width:30px;text-align:right;top:390.88px;font-size:6.9px;line-height:7.928px;color:#1e1e1e;">0,4</div>
<div class="a" style="left:32.5px;top:394px;width:3px;height:1px;background:#333;"></div>
<div class="t" style="left:1.50px;width:30px;text-align:right;top:407.68px;font-size:6.9px;line-height:7.928px;color:#1e1e1e;">0,3</div>
<div class="a" style="left:32.5px;top:411px;width:3px;height:1px;background:#333;"></div>
<div class="t" style="left:1.50px;width:30px;text-align:right;top:424.48px;font-size:6.9px;line-height:7.928px;color:#1e1e1e;">0,2</div>
<div class="a" style="left:32.5px;top:428px;width:3px;height:1px;background:#333;"></div>
<div class="t" style="left:1.50px;width:30px;text-align:right;top:441.28px;font-size:6.9px;line-height:7.928px;color:#1e1e1e;">0,1</div>
<div class="a" style="left:32.5px;top:445px;width:3px;height:1px;background:#333;"></div>
<div class="t" style="left:1.50px;width:30px;text-align:right;top:458.08px;font-size:6.9px;line-height:7.928px;color:#1e1e1e;">0</div>
<div class="a" style="left:32.5px;top:462px;width:3px;height:1px;background:#333;"></div>
<div class="t" style="left:22.00px;width:30px;text-align:center;top:466.08px;font-size:6.9px;line-height:7.928px;color:#1e1e1e;">0</div>
<div class="a" style="left:37px;top:462px;width:1px;height:2px;background:#333;"></div>
<div class="t" style="left:38.76px;width:30px;text-align:center;top:466.08px;font-size:6.9px;line-height:7.928px;color:#1e1e1e;">20</div>
<div class="a" style="left:54px;top:462px;width:1px;height:2px;background:#333;"></div>
<div class="t" style="left:55.52px;width:30px;text-align:center;top:466.08px;font-size:6.9px;line-height:7.928px;color:#1e1e1e;">40</div>
<div class="a" style="left:71px;top:462px;width:1px;height:2px;background:#333;"></div>
<div class="t" style="left:72.28px;width:30px;text-align:center;top:466.08px;font-size:6.9px;line-height:7.928px;color:#1e1e1e;">60</div>
<div class="a" style="left:87px;top:462px;width:1px;height:2px;background:#333;"></div>
<div class="t" style="left:89.04px;width:30px;text-align:center;top:466.08px;font-size:6.9px;line-height:7.928px;color:#1e1e1e;">80</div>
<div class="a" style="left:104px;top:462px;width:1px;height:2px;background:#333;"></div>
<div class="t" style="left:105.80px;width:30px;text-align:center;top:466.08px;font-size:6.9px;line-height:7.928px;color:#1e1e1e;">100</div>
<div class="a" style="left:121px;top:462px;width:1px;height:2px;background:#333;"></div>
<div class="t" style="left:122.56px;width:30px;text-align:center;top:466.08px;font-size:6.9px;line-height:7.928px;color:#1e1e1e;">120</div>
<div class="a" style="left:138px;top:462px;width:1px;height:2px;background:#333;"></div>
<div class="t" style="left:139.32px;width:30px;text-align:center;top:466.08px;font-size:6.9px;line-height:7.928px;color:#1e1e1e;">140</div>
<div class="a" style="left:154px;top:462px;width:1px;height:2px;background:#333;"></div>
<div class="t" style="left:156.08px;width:30px;text-align:center;top:466.08px;font-size:6.9px;line-height:7.928px;color:#1e1e1e;">160</div>
<div class="a" style="left:171px;top:462px;width:1px;height:2px;background:#333;"></div>
<div class="t" style="left:172.84px;width:30px;text-align:center;top:466.08px;font-size:6.9px;line-height:7.928px;color:#1e1e1e;">180</div>
<div class="a" style="left:188px;top:462px;width:1px;height:2px;background:#333;"></div>
<div class="t" style="left:189.60px;width:30px;text-align:center;top:466.08px;font-size:6.9px;line-height:7.928px;color:#1e1e1e;">200</div>
<div class="a" style="left:205px;top:462px;width:1px;height:2px;background:#333;"></div>
<div class="t" style="left:206.36px;width:30px;text-align:center;top:466.08px;font-size:6.9px;line-height:7.928px;color:#1e1e1e;">220</div>
<div class="a" style="left:221px;top:462px;width:1px;height:2px;background:#333;"></div>
<div class="t" style="left:223.12px;width:30px;text-align:center;top:466.08px;font-size:6.9px;line-height:7.928px;color:#1e1e1e;">240</div>
<div class="a" style="left:238px;top:462px;width:1px;height:2px;background:#333;"></div>
<div class="t" style="left:249.10px;width:30px;text-align:center;top:466.08px;font-size:6.9px;line-height:7.928px;color:#1e1e1e;">271</div>
<div class="a" style="left:264px;top:462px;width:1px;height:2px;background:#333;"></div>
<div class="t" style="left:113.00px;width:80px;text-align:center;top:474.89px;font-size:6.35px;line-height:7.296px;color:#1e1e1e;">Frequency [Hz]</div>
<div class="t" style="left:-83.20px;top:413.98px;width:200px;text-align:center;font-size:6.7px;line-height:8.04px;color:#1e1e1e;transform:rotate(-90deg);transform-origin:100px 4.02px;">Acceleration [m/s&#178;]</div>
<div class="a" style="left:13px;top:484px;width:117.5px;height:26px;background:#b2b2b2;box-sizing:border-box;border-top:1px solid #c8c8c8;border-left:1px solid #c8c8c8;border-bottom:1px solid #8a8a8a;border-right:1px solid #8a8a8a;"></div>
<div class="a" style="left:14.3px;top:487.0px;width:36.2px;height:9.3px;background:#c4c4c4;box-sizing:border-box;border-top:1px solid #3a3a3a;border-left:1px solid #3a3a3a;border-bottom:1px solid #3a3a3a;border-right:1px solid #3a3a3a;border-radius:1.5px;"></div>
<div class="t" style="left:17.40px;width:30px;text-align:center;top:488.18px;font-size:6.9px;line-height:7.928px;color:#1e1e1e;">m1</div>
<div class="a" style="left:51.8px;top:487.0px;width:22.7px;height:9.3px;background:#c4c4c4;box-sizing:border-box;border-top:1px solid #3a3a3a;border-left:1px solid #3a3a3a;border-bottom:1px solid #8a8a8a;border-right:1px solid #8a8a8a;"></div>
<div class="t" style="left:52.60px;top:488.18px;font-size:6.9px;line-height:7.928px;color:#1e1e1e;">112,0</div>
<div class="a" style="left:76px;top:487.0px;width:22.8px;height:9.3px;background:#c4c4c4;box-sizing:border-box;border-top:1px solid #3a3a3a;border-left:1px solid #3a3a3a;border-bottom:1px solid #8a8a8a;border-right:1px solid #8a8a8a;"></div>
<div class="t" style="left:76.40px;top:488.18px;font-size:6.9px;line-height:7.928px;color:#1e1e1e;">0,2825</div>
<div class="a" style="left:100px;top:487.0px;width:8.7px;height:9.3px;background:#dcdcdc;box-sizing:border-box;border-top:1px solid #555;border-left:1px solid #555;border-bottom:1px solid #e8e8e8;border-right:1px solid #e8e8e8;"></div>
<div class="a" style="left:101.3px;top:488.4px;width:6px;height:6.4px;background:#ffffff;"></div>
<div class="a" style="left:109.3px;top:487.0px;width:11.7px;height:9.3px;background:#000;"></div>
<svg class="a" style="left:109.3px;top:487.0px;" width="11.7" height="9.3" viewBox="0 0 11.7 9.3"><path d="M5.85 1 V8.3 M1.2 4.65 H10.5" stroke="#8a8a8a" stroke-width="1"/><circle cx="5.85" cy="4.65" r="1.6" fill="none" stroke="#9a9a9a" stroke-width="0.8"/></svg>
<div class="a" style="left:121.7px;top:487.0px;width:7.8px;height:9.3px;background:#2a2a2a;"></div>
<svg class="a" style="left:121.7px;top:487.0px;" width="7.8" height="9.3" viewBox="0 0 7.8 9.3"><path d="M2.4 4.6 V3.1 A1.5 1.5 0 0 1 5.4 3.1 V4.6" fill="none" stroke="#e0e0e0" stroke-width="0.8"/><rect x="1.6" y="4.6" width="4.6" height="3.6" fill="none" stroke="#e0e0e0" stroke-width="0.8"/></svg>
<div class="a" style="left:14.3px;top:498.8px;width:36.2px;height:9.3px;background:#c4c4c4;box-sizing:border-box;border-top:1px solid #3a3a3a;border-left:1px solid #3a3a3a;border-bottom:1px solid #3a3a3a;border-right:1px solid #3a3a3a;border-radius:1.5px;"></div>
<div class="t" style="left:17.40px;width:30px;text-align:center;top:499.98px;font-size:6.9px;line-height:7.928px;color:#1e1e1e;">m2</div>
<div class="a" style="left:51.8px;top:498.8px;width:22.7px;height:9.3px;background:#c4c4c4;box-sizing:border-box;border-top:1px solid #3a3a3a;border-left:1px solid #3a3a3a;border-bottom:1px solid #8a8a8a;border-right:1px solid #8a8a8a;"></div>
<div class="t" style="left:52.60px;top:499.98px;font-size:6.9px;line-height:7.928px;color:#1e1e1e;">37,0</div>
<div class="a" style="left:76px;top:498.8px;width:22.8px;height:9.3px;background:#c4c4c4;box-sizing:border-box;border-top:1px solid #3a3a3a;border-left:1px solid #3a3a3a;border-bottom:1px solid #8a8a8a;border-right:1px solid #8a8a8a;"></div>
<div class="t" style="left:76.40px;top:499.98px;font-size:6.9px;line-height:7.928px;color:#1e1e1e;">0,4405</div>
<div class="a" style="left:100px;top:498.8px;width:8.7px;height:9.3px;background:#dcdcdc;box-sizing:border-box;border-top:1px solid #555;border-left:1px solid #555;border-bottom:1px solid #e8e8e8;border-right:1px solid #e8e8e8;"></div>
<div class="a" style="left:101.3px;top:500.2px;width:6px;height:6.4px;background:#f4f4f4;"></div>
<div class="a" style="left:102.6px;top:501.5px;width:3.4px;height:3.6px;background:#000;"></div>
<div class="a" style="left:109.3px;top:498.8px;width:11.7px;height:9.3px;background:#000;"></div>
<svg class="a" style="left:109.3px;top:498.8px;" width="11.7" height="9.3" viewBox="0 0 11.7 9.3"><path d="M5.85 1 V8.3 M1.2 4.65 H10.5" stroke="#8a8a8a" stroke-width="1"/><circle cx="5.85" cy="4.65" r="1.6" fill="none" stroke="#9a9a9a" stroke-width="0.8"/></svg>
<div class="a" style="left:121.7px;top:498.8px;width:7.8px;height:9.3px;background:#2a2a2a;"></div>
<svg class="a" style="left:121.7px;top:498.8px;" width="7.8" height="9.3" viewBox="0 0 7.8 9.3"><path d="M2.4 4.6 V3.1 A1.5 1.5 0 0 1 5.4 3.1 V4.6" fill="none" stroke="#e0e0e0" stroke-width="0.8"/><rect x="1.6" y="4.6" width="4.6" height="3.6" fill="none" stroke="#e0e0e0" stroke-width="0.8"/></svg>
<div class="a" style="left:177.5px;top:484.5px;width:21.5px;height:21px;background:#c6c6c6;box-sizing:border-box;border-top:1px solid #e0e0e0;border-left:1px solid #e0e0e0;border-bottom:1px solid #8a8a8a;border-right:1px solid #8a8a8a;"></div>
<svg class="a" style="left:177.5px;top:484.5px;" width="21.5" height="21" viewBox="0 0 21.5 21"><path d="M10.75 2.5 L18.5 10.5 L10.75 18.5 L3 10.5 Z M6.9 6.5 L14.6 14.5 M14.6 6.5 L6.9 14.5" fill="none" stroke="#3a3a3a" stroke-width="1"/></svg>
<div class="a" style="left:214.3px;top:486.3px;width:50.2px;height:21.2px;background:None;box-sizing:border-box;border-top:1px solid #6a6a6a;border-left:1px solid #6a6a6a;border-bottom:1px solid #4a4a4a;border-right:1px solid #4a4a4a;background:linear-gradient(180deg,#e4e4e4 0%,#d2d2d2 50%,#bdbdbd 100%);border-radius:1px;"></div>
<div class="t" style="left:214.40px;width:50px;text-align:center;top:493.64px;font-size:6.8px;line-height:7.813px;color:#1e1e1e;">Maxima</div>
<div class="t" style="left:279.50px;top:130.89px;font-size:6.35px;line-height:7.296px;color:#1e1e1e;">Scanning Rate</div>
<div class="a" style="left:279px;top:139px;width:62px;height:9.5px;box-sizing:border-box;background:linear-gradient(180deg,#dcdcdc,#d2d2d2);border-top:1px solid #e6e6e6;border-left:1px solid #e0e0e0;border-bottom:1px solid #7e7e7e;border-right:2px solid #7a7a7a;"></div>
<div class="a" style="left:326.5px;top:140px;width:12px;height:7.5px;background:#cdcdcd;"></div>
<svg class="a" style="left:326.5px;top:139px;" width="12" height="9.5" viewBox="0 0 12 9.5"><path d="M2.6 2.85 H10.2" stroke="#555" stroke-width="1"/><path d="M2.6 2.85 L6.3 6.95" stroke="#666" stroke-width="0.9"/><path d="M10.2 2.85 L6.3 6.95" stroke="#e2e2e2" stroke-width="0.8"/></svg>
<div class="t" style="left:281.00px;top:140.64px;font-size:6.35px;line-height:7.296px;color:#1e1e1e;">8 k/s</div>
<div class="t" style="left:279.50px;top:153.39px;font-size:6.35px;line-height:7.296px;color:#1e1e1e;">Scanning Time</div>
<div class="a" style="left:279px;top:161.2px;width:62px;height:9.3px;box-sizing:border-box;background:linear-gradient(180deg,#dcdcdc,#d2d2d2);border-top:1px solid #e6e6e6;border-left:1px solid #e0e0e0;border-bottom:1px solid #7e7e7e;border-right:2px solid #7a7a7a;"></div>
<div class="a" style="left:326.5px;top:162.2px;width:12px;height:7.300000000000001px;background:#cdcdcd;"></div>
<svg class="a" style="left:326.5px;top:161.2px;" width="12" height="9.3" viewBox="0 0 12 9.3"><path d="M2.6 2.75 H10.2" stroke="#555" stroke-width="1"/><path d="M2.6 2.75 L6.3 6.85" stroke="#666" stroke-width="0.9"/><path d="M10.2 2.75 L6.3 6.85" stroke="#e2e2e2" stroke-width="0.8"/></svg>
<div class="t" style="left:281.00px;top:162.74px;font-size:6.35px;line-height:7.296px;color:#1e1e1e;">1 Second(s)</div>
<div class="a" style="left:280px;top:170.3px;width:60px;height:4.2px;background:#9c9c9c;"></div>
<div class="a" style="left:280px;top:174.5px;width:60px;height:5px;background:#c8c8c8;"></div>
<div class="a" style="left:281.5px;top:175px;width:2px;height:3px;background:#4a5ad0;"></div>
<div class="t" style="left:279.50px;top:182.89px;font-size:6.35px;line-height:7.296px;color:#1e1e1e;"># Of Means</div>
<div class="a" style="left:286.7px;top:192px;width:28px;height:12.3px;background:#cbcbcb;box-sizing:border-box;border-top:1px solid #8a8a8a;border-left:1px solid #8a8a8a;border-bottom:1px solid #d8d8d8;border-right:1px solid #d8d8d8;border-top-width:2px;border-left-width:2px;"></div>
<div class="a" style="left:280px;top:191.1px;width:6.7px;height:13.2px;background:#d6d6d6;box-sizing:border-box;border-top:1px solid #eeeeee;border-left:1px solid #eeeeee;border-bottom:1px solid #707070;border-right:1px solid #707070;border-radius:3.3px;"></div>
<div class="t" style="left:289.30px;top:195.49px;font-size:6.35px;line-height:7.296px;color:#1e1e1e;">1</div>
<div class="t" style="left:325.00px;top:191.89px;font-size:6.35px;line-height:7.296px;color:#1e1e1e;">1</div>
<div class="t" style="left:332.20px;top:198.09px;font-size:6.35px;line-height:7.296px;color:#1e1e1e;">1</div>
<svg class="a" style="left:322px;top:190px;" width="14" height="14" viewBox="0 0 14 14"><line x1="3.2" y1="12.5" x2="11.1" y2="5" stroke="#333" stroke-width="0.7"/></svg>
<div class="t" style="left:279.50px;top:215.69px;font-size:6.35px;line-height:7.296px;color:#1e1e1e;">Frequency [Hz]</div>
<div class="a" style="left:279.5px;top:224.5px;width:62px;height:11.5px;background:#cecece;box-sizing:border-box;border-top:1px solid #8a8a8a;border-left:1px solid #8a8a8a;border-bottom:1px solid #dedede;border-right:1px solid #dedede;"></div>
<div class="t" style="left:281.50px;top:227.19px;font-size:6.35px;line-height:7.296px;color:#1e1e1e;">30,00</div>
<div class="t" style="left:279.50px;top:256.89px;font-size:6.35px;line-height:7.296px;color:#1e1e1e;">Frequency Resolutio</div>
<div class="a" style="left:279.5px;top:266px;width:62px;height:12.5px;background:#cecece;box-sizing:border-box;border-top:1px solid #8a8a8a;border-left:1px solid #8a8a8a;border-bottom:1px solid #dedede;border-right:1px solid #dedede;"></div>
<div class="t" style="left:281.50px;top:269.19px;font-size:6.35px;line-height:7.296px;color:#1e1e1e;">1,00</div>
<div class="t" style="left:279.50px;top:281.39px;font-size:6.35px;line-height:7.296px;color:#1e1e1e;">Mode</div>
<div class="a" style="left:279px;top:290px;width:62px;height:9.5px;box-sizing:border-box;background:linear-gradient(180deg,#dcdcdc,#d2d2d2);border-top:1px solid #e6e6e6;border-left:1px solid #e0e0e0;border-bottom:1px solid #7e7e7e;border-right:2px solid #7a7a7a;"></div>
<div class="a" style="left:326.5px;top:291px;width:12px;height:7.5px;background:#cdcdcd;"></div>
<svg class="a" style="left:326.5px;top:290px;" width="12" height="9.5" viewBox="0 0 12 9.5"><path d="M2.6 2.85 H10.2" stroke="#555" stroke-width="1"/><path d="M2.6 2.85 L6.3 6.95" stroke="#666" stroke-width="0.9"/><path d="M10.2 2.85 L6.3 6.95" stroke="#e2e2e2" stroke-width="0.8"/></svg>
<div class="t" style="left:281.00px;top:291.64px;font-size:6.35px;line-height:7.296px;color:#1e1e1e;">Acceleration</div>
<div class="t" style="left:279.50px;top:301.89px;font-size:6.35px;line-height:7.296px;color:#1e1e1e;">Window Function</div>
<div class="a" style="left:279px;top:312.3px;width:62px;height:9.7px;box-sizing:border-box;background:linear-gradient(180deg,#dcdcdc,#d2d2d2);border-top:1px solid #e6e6e6;border-left:1px solid #e0e0e0;border-bottom:1px solid #7e7e7e;border-right:2px solid #7a7a7a;"></div>
<div class="a" style="left:326.5px;top:313.3px;width:12px;height:7.699999999999999px;background:#cdcdcd;"></div>
<svg class="a" style="left:326.5px;top:312.3px;" width="12" height="9.7" viewBox="0 0 12 9.7"><path d="M2.6 2.95 H10.2" stroke="#555" stroke-width="1"/><path d="M2.6 2.95 L6.3 7.05" stroke="#666" stroke-width="0.9"/><path d="M10.2 2.95 L6.3 7.05" stroke="#e2e2e2" stroke-width="0.8"/></svg>
<div class="t" style="left:281.00px;top:314.04px;font-size:6.35px;line-height:7.296px;color:#1e1e1e;"></div>
<div class="t" style="left:284.50px;top:314.09px;font-size:6.35px;line-height:7.296px;color:#1e1e1e;">----- (Uniform)</div>
<div class="t" style="left:279.50px;top:326.89px;font-size:6.35px;line-height:7.296px;color:#1e1e1e;">Log dB (T) Or Linear</div>
<div class="a" style="left:279px;top:335.8px;width:62px;height:9.3px;box-sizing:border-box;background:linear-gradient(180deg,#dcdcdc,#d2d2d2);border-top:1px solid #e6e6e6;border-left:1px solid #e0e0e0;border-bottom:1px solid #7e7e7e;border-right:2px solid #7a7a7a;"></div>
<div class="a" style="left:326.5px;top:336.8px;width:12px;height:7.300000000000001px;background:#cdcdcd;"></div>
<svg class="a" style="left:326.5px;top:335.8px;" width="12" height="9.3" viewBox="0 0 12 9.3"><path d="M2.6 2.75 H10.2" stroke="#555" stroke-width="1"/><path d="M2.6 2.75 L6.3 6.85" stroke="#666" stroke-width="0.9"/><path d="M10.2 2.75 L6.3 6.85" stroke="#e2e2e2" stroke-width="0.8"/></svg>
<div class="t" style="left:281.00px;top:337.34px;font-size:6.35px;line-height:7.296px;color:#1e1e1e;">Linear</div>
<div class="t" style="left:279.50px;top:349.39px;font-size:6.35px;line-height:7.296px;color:#1e1e1e;">Unit Of Magnitude</div>
<div class="a" style="left:279px;top:357.5px;width:62px;height:10.3px;box-sizing:border-box;background:linear-gradient(180deg,#dcdcdc,#d2d2d2);border-top:1px solid #e6e6e6;border-left:1px solid #e0e0e0;border-bottom:1px solid #7e7e7e;border-right:2px solid #7a7a7a;"></div>
<div class="a" style="left:326.5px;top:358.5px;width:12px;height:8.3px;background:#cdcdcd;"></div>
<svg class="a" style="left:326.5px;top:357.5px;" width="12" height="10.3" viewBox="0 0 12 10.3"><path d="M2.6 3.25 H10.2" stroke="#555" stroke-width="1"/><path d="M2.6 3.25 L6.3 7.35" stroke="#666" stroke-width="0.9"/><path d="M10.2 3.25 L6.3 7.35" stroke="#e2e2e2" stroke-width="0.8"/></svg>
<div class="t" style="left:281.00px;top:359.54px;font-size:6.35px;line-height:7.296px;color:#1e1e1e;">Vrms</div>
<div class="a" style="left:570px;top:115px;width:223px;height:432px;background:#b9b9b9;"></div>
<div class="a" style="left:578px;top:121.6px;width:162.5px;height:18.2px;background:#d3d3d3;box-sizing:border-box;border-top:1px solid #8e8e8e;border-left:1px solid #8e8e8e;border-bottom:1px solid #dcdcdc;border-right:1px solid #dcdcdc;border-top-width:2px;border-left-width:2px;"></div>
<div class="t" style="left:580.20px;top:124.49px;font-size:11.7px;line-height:13.443px;color:#111;transform:scaleY(1.1);-webkit-text-stroke:0.25px #111;">2 Plane Balancing</div>
<div class="a" style="left:578px;top:156.5px;width:215px;height:1px;background:#dadada;"></div>
<div class="a" style="left:578px;top:157.5px;width:215px;height:124.5px;background:#c0c0c0;"></div>
<div class="a" style="left:578px;top:282px;width:215px;height:1px;background:#8e8e8e;"></div>
<div class="a" style="left:578px;top:283px;width:215px;height:1.5px;background:#e2e2e2;"></div>
<svg class="a" style="left:619px;top:162px;" width="174" height="97" viewBox="0 0 174 97"><rect width="174" height="97" fill="#000"/><line x1="0" x2="174" y1="0.50" y2="0.50" stroke="#154215" stroke-width="1"/><line x1="0" x2="174" y1="6.50" y2="6.50" stroke="#154215" stroke-width="1"/><line x1="0" x2="174" y1="12.50" y2="12.50" stroke="#154215" stroke-width="1"/><line x1="0" x2="174" y1="18.50" y2="18.50" stroke="#154215" stroke-width="1"/><line x1="0" x2="174" y1="24.50" y2="24.50" stroke="#154215" stroke-width="1"/><line x1="0" x2="174" y1="30.50" y2="30.50" stroke="#154215" stroke-width="1"/><line x1="0" x2="174" y1="36.50" y2="36.50" stroke="#154215" stroke-width="1"/><line x1="0" x2="174" y1="42.50" y2="42.50" stroke="#154215" stroke-width="1"/><line x1="0" x2="174" y1="48.50" y2="48.50" stroke="#154215" stroke-width="1"/><line x1="0" x2="174" y1="54.50" y2="54.50" stroke="#154215" stroke-width="1"/><line x1="0" x2="174" y1="60.50" y2="60.50" stroke="#154215" stroke-width="1"/><line x1="0" x2="174" y1="66.50" y2="66.50" stroke="#154215" stroke-width="1"/><line x1="0" x2="174" y1="72.50" y2="72.50" stroke="#154215" stroke-width="1"/><line x1="0" x2="174" y1="78.50" y2="78.50" stroke="#154215" stroke-width="1"/><line x1="0" x2="174" y1="84.50" y2="84.50" stroke="#154215" stroke-width="1"/><line x1="0" x2="174" y1="90.50" y2="90.50" stroke="#154215" stroke-width="1"/><line x1="0" x2="174" y1="96.50" y2="96.50" stroke="#154215" stroke-width="1"/><line y1="0" y2="97" x1="0.50" x2="0.50" stroke="#154215" stroke-width="1"/><line y1="0" y2="97" x1="7.50" x2="7.50" stroke="#154215" stroke-width="1"/><line y1="0" y2="97" x1="13.50" x2="13.50" stroke="#154215" stroke-width="1"/><line y1="0" y2="97" x1="20.50" x2="20.50" stroke="#154215" stroke-width="1"/><line y1="0" y2="97" x1="27.50" x2="27.50" stroke="#154215" stroke-width="1"/><line y1="0" y2="97" x1="33.50" x2="33.50" stroke="#154215" stroke-width="1"/><line y1="0" y2="97" x1="40.50" x2="40.50" stroke="#154215" stroke-width="1"/><line y1="0" y2="97" x1="47.50" x2="47.50" stroke="#154215" stroke-width="1"/><line y1="0" y2="97" x1="53.50" x2="53.50" stroke="#154215" stroke-width="1"/><line y1="0" y2="97" x1="60.50" x2="60.50" stroke="#154215" stroke-width="1"/><line y1="0" y2="97" x1="67.50" x2="67.50" stroke="#154215" stroke-width="1"/><line y1="0" y2="97" x1="74.50" x2="74.50" stroke="#154215" stroke-width="1"/><line y1="0" y2="97" x1="80.50" x2="80.50" stroke="#154215" stroke-width="1"/><line y1="0" y2="97" x1="87.50" x2="87.50" stroke="#154215" stroke-width="1"/><line y1="0" y2="97" x1="94.50" x2="94.50" stroke="#154215" stroke-width="1"/><line y1="0" y2="97" x1="100.50" x2="100.50" stroke="#154215" stroke-width="1"/><line y1="0" y2="97" x1="107.50" x2="107.50" stroke="#154215" stroke-width="1"/><line y1="0" y2="97" x1="114.50" x2="114.50" stroke="#154215" stroke-width="1"/><line y1="0" y2="97" x1="120.50" x2="120.50" stroke="#154215" stroke-width="1"/><line y1="0" y2="97" x1="127.50" x2="127.50" stroke="#154215" stroke-width="1"/><line y1="0" y2="97" x1="134.50" x2="134.50" stroke="#154215" stroke-width="1"/><line y1="0" y2="97" x1="141.50" x2="141.50" stroke="#154215" stroke-width="1"/><line y1="0" y2="97" x1="147.50" x2="147.50" stroke="#154215" stroke-width="1"/><line y1="0" y2="97" x1="154.50" x2="154.50" stroke="#154215" stroke-width="1"/><line y1="0" y2="97" x1="161.50" x2="161.50" stroke="#154215" stroke-width="1"/><line y1="0" y2="97" x1="167.50" x2="167.50" stroke="#154215" stroke-width="1"/><line y1="0" y2="97" x1="174.50" x2="174.50" stroke="#154215" stroke-width="1"/><path d="M0.00 18.23L0.20 18.06M0.45 9.99L0.65 26.44M0.90 16.66L1.10 28.39M1.35 12.05L1.55 17.03M1.80 13.04L2.00 23.36M2.25 20.87L2.45 24.67M2.70 29.80L2.90 24.89M3.15 35.39L3.35 30.38M3.60 27.34L3.80 30.88M4.05 36.34L4.25 21.91M4.50 36.65L4.70 40.23M4.95 39.05L5.15 42.84M5.40 45.07L5.60 44.88M5.85 34.72L6.05 45.83M6.30 48.01L6.50 45.25M6.75 40.82L6.95 53.26M7.20 58.49L7.40 41.30M7.65 66.12L7.85 60.06M8.10 57.27L8.30 48.30M8.55 69.15L8.75 77.35M9.00 63.05L9.20 69.62M9.45 71.65L9.65 66.94M9.90 70.95L10.10 70.57M10.35 77.18L10.55 67.63M10.80 68.93L11.00 77.10M11.25 82.17L11.45 75.60M11.70 79.27L11.90 87.70M12.15 86.61L12.35 78.23M12.60 86.58L12.80 87.87M13.05 86.70L13.25 88.07M13.50 89.58L13.70 96.90M13.95 81.39L14.15 89.99M14.40 96.90L14.60 87.02M14.85 91.92L15.05 93.54M15.30 88.83L15.50 82.10M15.75 92.39L15.95 86.67M16.20 84.14L16.40 96.90M16.65 96.90L16.85 92.25M17.10 96.90L17.30 96.90M17.55 89.72L17.75 91.11M18.00 93.57L18.20 96.90M18.45 83.43L18.65 93.42M18.90 91.72L19.10 93.24M19.35 96.90L19.55 96.90M19.80 96.90L20.00 83.79M20.25 96.90L20.45 94.73M20.70 93.58L20.90 89.00M21.15 87.99L21.35 89.28M21.60 96.21L21.80 96.90M22.05 86.56L22.25 86.00M22.50 78.78L22.70 86.18M22.95 86.98L23.15 81.31M23.40 90.06L23.60 87.21M23.85 84.73L24.05 77.55M24.30 65.13L24.50 72.50M24.75 67.88L24.95 72.90M25.20 70.05L25.40 74.09M25.65 70.45L25.85 82.37M26.10 72.77L26.30 73.24M26.55 58.59L26.75 59.56M27.00 53.99L27.20 51.69M27.45 59.05L27.65 51.50M27.90 43.51L28.10 54.41M28.35 45.31L28.55 52.26M28.80 57.26L29.00 47.65M29.25 49.85L29.45 44.68M29.70 44.84L29.90 40.49M30.15 51.14L30.35 27.71M30.60 28.78L30.80 38.27M31.05 38.46L31.25 33.40M31.50 26.83L31.70 28.22M31.95 25.57L32.15 38.73M32.40 31.38L32.60 17.65M32.85 21.18L33.05 30.95M33.30 24.84L33.50 28.05M33.75 23.30L33.95 11.08M34.20 16.61L34.40 9.10M34.65 12.20L34.85 21.68M35.10 14.90L35.30 0.40M35.55 13.73L35.75 15.33M36.00 0.77L36.20 7.22M36.45 6.24L36.65 0.40M36.90 14.79L37.10 2.49M37.35 9.62L37.55 11.59M37.80 7.26L38.00 0.40M38.25 2.63L38.45 12.22M38.70 7.47L38.90 0.40M39.15 0.40L39.35 6.92M39.60 0.40L39.80 2.55M40.05 7.17L40.25 1.18M40.50 0.40L40.70 0.40M40.95 0.40L41.15 3.25M41.40 4.50L41.60 9.58M41.85 2.42L42.05 5.38M42.30 1.48L42.50 10.05M42.75 6.85L42.95 8.92M43.20 11.96L43.40 11.86M43.65 12.31L43.85 13.24M44.10 4.87L44.30 7.53M44.55 17.31L44.75 6.90M45.00 10.06L45.20 3.40M45.45 14.81L45.65 14.90M45.90 19.78L46.10 15.16M46.35 15.35L46.55 17.16M46.80 22.00L47.00 17.36M47.25 22.56L47.45 21.68M47.70 31.00L47.90 24.53M48.15 34.07L48.35 33.20M48.60 30.29L48.80 19.25M49.05 28.40L49.25 34.04M49.50 37.99L49.70 31.37M49.95 32.09L50.15 33.01M50.40 43.99L50.60 41.87M50.85 47.83L51.05 47.58M51.30 53.84L51.50 50.40M51.75 64.23L51.95 58.82M52.20 52.62L52.40 60.29M52.65 54.95L52.85 65.36M53.10 63.07L53.30 58.73M53.55 69.77L53.75 67.93M54.00 52.69L54.20 70.59M54.45 73.50L54.65 72.75M54.90 72.00L55.10 72.34M55.35 69.21L55.55 70.29M55.80 79.57L56.00 79.31M56.25 87.70L56.45 88.16M56.70 86.12L56.90 77.78M57.15 83.37L57.35 79.50M57.60 80.70L57.80 86.98M58.05 75.96L58.25 90.85M58.50 93.12L58.70 92.01M58.95 84.64L59.15 91.87M59.40 96.65L59.60 89.99M59.85 87.21L60.05 94.27M60.30 96.07L60.50 88.49M60.75 89.89L60.95 90.10M61.20 96.90L61.40 94.50M61.65 94.50L61.85 96.90M62.10 90.01L62.30 96.26M62.55 96.90L62.75 84.06M63.00 95.95L63.20 96.90M63.45 96.83L63.65 93.28M63.90 91.37L64.10 96.31M64.35 96.90L64.55 96.90M64.80 96.90L65.00 96.90M65.25 93.50L65.45 96.17M65.70 91.86L65.90 96.85M66.15 95.68L66.35 91.82M66.60 91.18L66.80 82.68M67.05 92.61L67.25 86.32M67.50 85.84L67.70 93.03M67.95 79.47L68.15 82.63M68.40 93.32L68.60 78.03M68.85 73.83L69.05 83.66M69.30 67.15L69.50 75.86M69.75 80.75L69.95 71.03M70.20 73.64L70.40 79.18M70.65 81.03L70.85 67.50M71.10 70.26L71.30 62.45M71.55 61.05L71.75 66.18M72.00 63.33L72.20 50.32M72.45 47.70L72.65 53.10M72.90 56.38L73.10 59.92M73.35 53.53L73.55 41.93M73.80 45.71L74.00 49.95M74.25 52.22L74.45 44.34M74.70 47.24L74.90 42.20M75.15 35.08L75.35 33.22M75.60 35.53L75.80 38.26M76.05 32.13L76.25 23.23M76.50 28.45L76.70 38.49M76.95 19.03L77.15 26.38M77.40 5.44L77.60 27.76M77.85 23.04L78.05 24.19M78.30 17.88L78.50 23.29M78.75 25.97L78.95 28.49M79.20 16.07L79.40 18.28M79.65 16.52L79.85 1.28M80.10 6.77L80.30 5.10M80.55 12.24L80.75 7.72M81.00 8.92L81.20 8.88M81.45 1.99L81.65 2.80M81.90 3.13L82.10 4.01M82.35 11.80L82.55 7.83M82.80 0.51L83.00 4.72M83.25 6.22L83.45 0.40M83.70 6.39L83.90 4.98M84.15 0.40L84.35 2.76M84.60 0.40L84.80 0.40M85.05 0.40L85.25 0.40M85.50 12.70L85.70 0.96M85.95 8.10L86.15 3.44M86.40 1.90L86.60 0.40M86.85 2.24L87.05 0.40M87.30 5.82L87.50 3.18M87.75 3.39L87.95 0.40M88.20 5.43L88.40 8.61M88.65 8.38L88.85 14.41M89.10 1.01L89.30 3.89M89.55 7.41L89.75 8.26M90.00 15.09L90.20 13.97M90.45 9.16L90.65 18.14M90.90 20.27L91.10 7.00M91.35 9.39L91.55 16.51M91.80 17.57L92.00 19.51M92.25 15.07L92.45 25.57M92.70 25.24L92.90 22.98M93.15 20.32L93.35 29.81M93.60 29.89L93.80 33.95M94.05 37.74L94.25 37.73M94.50 36.51L94.70 32.00M94.95 43.82L95.15 43.31M95.40 45.20L95.60 40.96M95.85 42.05L96.05 52.96M96.30 47.00L96.50 54.56M96.75 48.02L96.95 57.40M97.20 61.08L97.40 59.01M97.65 58.37L97.85 63.58M98.10 59.79L98.30 60.15M98.55 63.42L98.75 62.38M99.00 61.85L99.20 70.80M99.45 69.49L99.65 69.66M99.90 83.64L100.10 70.02M100.35 79.08L100.55 78.79M100.80 79.77L101.00 76.74M101.25 77.82L101.45 76.97M101.70 85.79L101.90 78.04M102.15 81.72L102.35 86.23M102.60 86.16L102.80 81.57M103.05 85.47L103.25 84.00M103.50 88.98L103.70 83.23M103.95 78.73L104.15 88.57M104.40 96.90L104.60 82.86M104.85 96.80L105.05 96.90M105.30 96.90L105.50 92.28M105.75 89.38L105.95 89.90M106.20 96.90L106.40 88.07M106.65 96.90L106.85 96.90M107.10 96.45L107.30 95.64M107.55 96.62L107.75 94.68M108.00 96.90L108.20 88.07M108.45 96.90L108.65 92.86M108.90 96.90L109.10 95.08M109.35 96.28L109.55 96.90M109.80 92.30L110.00 90.91M110.25 96.90L110.45 96.90M110.70 95.75L110.90 96.84M111.15 90.15L111.35 90.86M111.60 80.26L111.80 85.61M112.05 88.91L112.25 86.59M112.50 96.90L112.70 90.63M112.95 88.71L113.15 84.20M113.40 79.66L113.60 80.25M113.85 73.96L114.05 82.98M114.30 75.04L114.50 77.46M114.75 74.15L114.95 72.43M115.20 73.16L115.40 70.42M115.65 69.08L115.85 63.21M116.10 66.72L116.30 64.41M116.55 48.84L116.75 59.77M117.00 57.48L117.20 54.35M117.45 62.95L117.65 53.43M117.90 50.21L118.10 51.93M118.35 45.95L118.55 46.99M118.80 41.72L119.00 51.87M119.25 42.89L119.45 48.30M119.70 35.40L119.90 41.51M120.15 46.48L120.35 38.67M120.60 41.88L120.80 30.89M121.05 35.29L121.25 45.54M121.50 32.72L121.70 24.91M121.95 25.98L122.15 31.31M122.40 21.53L122.60 21.92M122.85 14.38L123.05 17.52M123.30 17.99L123.50 24.37M123.75 16.06L123.95 15.96M124.20 15.30L124.40 13.05M124.65 19.81L124.85 10.09M125.10 11.20L125.30 9.28M125.55 9.95L125.75 11.08M126.00 6.32L126.20 3.40M126.45 7.98L126.65 4.41M126.90 9.08L127.10 2.54M127.35 3.56L127.55 10.74M127.80 0.40L128.00 7.57M128.25 1.39L128.45 9.08M128.70 10.75L128.90 0.40M129.15 8.47L129.35 12.18M129.60 1.66L129.80 9.02M130.05 1.53L130.25 0.40M130.50 2.68L130.70 0.40M130.95 0.40L131.15 0.40M131.40 1.98L131.60 0.40M131.85 2.45L132.05 0.40M132.30 2.25L132.50 9.92M132.75 2.15L132.95 3.61M133.20 1.57L133.40 1.33M133.65 0.40L133.85 16.98M134.10 11.16L134.30 10.70M134.55 14.56L134.75 7.54M135.00 12.11L135.20 10.92M135.45 22.67L135.65 18.97M135.90 16.23L136.10 18.32M136.35 21.49L136.55 18.80M136.80 22.08L137.00 26.40M137.25 13.93L137.45 26.80M137.70 22.13L137.90 22.42M138.15 23.10L138.35 31.55M138.60 36.68L138.80 28.79M139.05 32.63L139.25 47.00M139.50 51.34L139.70 39.96M139.95 42.08L140.15 41.41M140.40 40.66L140.60 48.26M140.85 31.45L141.05 41.01M141.30 41.86L141.50 47.49M141.75 63.41L141.95 50.72M142.20 58.05L142.40 52.62M142.65 58.65L142.85 54.36M143.10 65.79L143.30 62.97M143.55 63.85L143.75 68.01M144.00 69.23L144.20 63.36M144.45 58.94L144.65 70.67M144.90 67.67L145.10 78.42M145.35 77.29L145.55 72.99M145.80 74.12L146.00 82.89M146.25 76.38L146.45 78.87M146.70 74.74L146.90 76.79M147.15 81.06L147.35 86.22M147.60 84.61L147.80 90.74M148.05 92.41L148.25 96.90M148.50 96.70L148.70 96.53M148.95 91.66L149.15 90.54M149.40 96.90L149.60 92.99M149.85 91.44L150.05 88.58M150.30 95.17L150.50 93.46M150.75 96.90L150.95 90.42M151.20 96.90L151.40 94.81M151.65 96.90L151.85 87.22M152.10 91.78L152.30 96.90M152.55 96.90L152.75 96.90M153.00 96.90L153.20 96.90M153.45 96.90L153.65 90.82M153.90 96.90L154.10 96.90M154.35 95.77L154.55 93.12M154.80 89.99L155.00 91.72M155.25 96.90L155.45 96.90M155.70 93.22L155.90 96.80M156.15 86.76L156.35 92.68M156.60 89.66L156.80 91.30M157.05 87.31L157.25 95.75M157.50 74.21L157.70 88.78M157.95 87.63L158.15 93.38M158.40 81.98L158.60 89.04M158.85 77.43L159.05 72.68M159.30 73.48L159.50 79.23M159.75 67.35L159.95 75.32M160.20 71.93L160.40 71.33M160.65 71.57L160.85 66.68M161.10 72.90L161.30 75.86M161.55 56.77L161.75 67.33M162.00 62.34L162.20 58.58M162.45 60.00L162.65 63.89M162.90 55.53L163.10 59.61M163.35 48.44L163.55 53.85M163.80 49.81L164.00 44.20M164.25 53.80L164.45 53.50M164.70 38.37L164.90 35.45M165.15 38.87L165.35 43.22M165.60 29.71L165.80 33.57M166.05 27.91L166.25 43.40M166.50 31.37L166.70 36.28M166.95 33.87L167.15 24.73M167.40 21.22L167.60 27.76M167.85 23.97L168.05 15.09M168.30 16.52L168.50 20.76M168.75 14.94L168.95 17.11M169.20 22.35L169.40 18.27M169.65 11.79L169.85 9.95M170.10 17.89L170.30 15.74M170.55 12.71L170.75 17.76M171.00 1.81L171.20 5.33M171.45 0.40L171.65 18.21M171.90 9.36L172.10 0.40M172.35 11.43L172.55 13.70M172.80 1.53L173.00 0.40M173.25 0.40L173.45 7.15M173.70 0.40L173.90 0.40" fill="none" stroke="#36f836" stroke-width="1.2"/><path d="M0.20 18.06 L0.65 26.44 L1.10 28.39 L1.55 17.03 L2.00 23.36 L2.45 24.67 L2.90 24.89 L3.35 30.38 L3.80 30.88 L4.25 21.91 L4.70 40.23 L5.15 42.84 L5.60 44.88 L6.05 45.83 L6.50 45.25 L6.95 53.26 L7.40 41.30 L7.85 60.06 L8.30 48.30 L8.75 77.35 L9.20 69.62 L9.65 66.94 L10.10 70.57 L10.55 67.63 L11.00 77.10 L11.45 75.60 L11.90 87.70 L12.35 78.23 L12.80 87.87 L13.25 88.07 L13.70 96.90 L14.15 89.99 L14.60 87.02 L15.05 93.54 L15.50 82.10 L15.95 86.67 L16.40 96.90 L16.85 92.25 L17.30 96.90 L17.75 91.11 L18.20 96.90 L18.65 93.42 L19.10 93.24 L19.55 96.90 L20.00 83.79 L20.45 94.73 L20.90 89.00 L21.35 89.28 L21.80 96.90 L22.25 86.00 L22.70 86.18 L23.15 81.31 L23.60 87.21 L24.05 77.55 L24.50 72.50 L24.95 72.90 L25.40 74.09 L25.85 82.37 L26.30 73.24 L26.75 59.56 L27.20 51.69 L27.65 51.50 L28.10 54.41 L28.55 52.26 L29.00 47.65 L29.45 44.68 L29.90 40.49 L30.35 27.71 L30.80 38.27 L31.25 33.40 L31.70 28.22 L32.15 38.73 L32.60 17.65 L33.05 30.95 L33.50 28.05 L33.95 11.08 L34.40 9.10 L34.85 21.68 L35.30 0.40 L35.75 15.33 L36.20 7.22 L36.65 0.40 L37.10 2.49 L37.55 11.59 L38.00 0.40 L38.45 12.22 L38.90 0.40 L39.35 6.92 L39.80 2.55 L40.25 1.18 L40.70 0.40 L41.15 3.25 L41.60 9.58 L42.05 5.38 L42.50 10.05 L42.95 8.92 L43.40 11.86 L43.85 13.24 L44.30 7.53 L44.75 6.90 L45.20 3.40 L45.65 14.90 L46.10 15.16 L46.55 17.16 L47.00 17.36 L47.45 21.68 L47.90 24.53 L48.35 33.20 L48.80 19.25 L49.25 34.04 L49.70 31.37 L50.15 33.01 L50.60 41.87 L51.05 47.58 L51.50 50.40 L51.95 58.82 L52.40 60.29 L52.85 65.36 L53.30 58.73 L53.75 67.93 L54.20 70.59 L54.65 72.75 L55.10 72.34 L55.55 70.29 L56.00 79.31 L56.45 88.16 L56.90 77.78 L57.35 79.50 L57.80 86.98 L58.25 90.85 L58.70 92.01 L59.15 91.87 L59.60 89.99 L60.05 94.27 L60.50 88.49 L60.95 90.10 L61.40 94.50 L61.85 96.90 L62.30 96.26 L62.75 84.06 L63.20 96.90 L63.65 93.28 L64.10 96.31 L64.55 96.90 L65.00 96.90 L65.45 96.17 L65.90 96.85 L66.35 91.82 L66.80 82.68 L67.25 86.32 L67.70 93.03 L68.15 82.63 L68.60 78.03 L69.05 83.66 L69.50 75.86 L69.95 71.03 L70.40 79.18 L70.85 67.50 L71.30 62.45 L71.75 66.18 L72.20 50.32 L72.65 53.10 L73.10 59.92 L73.55 41.93 L74.00 49.95 L74.45 44.34 L74.90 42.20 L75.35 33.22 L75.80 38.26 L76.25 23.23 L76.70 38.49 L77.15 26.38 L77.60 27.76 L78.05 24.19 L78.50 23.29 L78.95 28.49 L79.40 18.28 L79.85 1.28 L80.30 5.10 L80.75 7.72 L81.20 8.88 L81.65 2.80 L82.10 4.01 L82.55 7.83 L83.00 4.72 L83.45 0.40 L83.90 4.98 L84.35 2.76 L84.80 0.40 L85.25 0.40 L85.70 0.96 L86.15 3.44 L86.60 0.40 L87.05 0.40 L87.50 3.18 L87.95 0.40 L88.40 8.61 L88.85 14.41 L89.30 3.89 L89.75 8.26 L90.20 13.97 L90.65 18.14 L91.10 7.00 L91.55 16.51 L92.00 19.51 L92.45 25.57 L92.90 22.98 L93.35 29.81 L93.80 33.95 L94.25 37.73 L94.70 32.00 L95.15 43.31 L95.60 40.96 L96.05 52.96 L96.50 54.56 L96.95 57.40 L97.40 59.01 L97.85 63.58 L98.30 60.15 L98.75 62.38 L99.20 70.80 L99.65 69.66 L100.10 70.02 L100.55 78.79 L101.00 76.74 L101.45 76.97 L101.90 78.04 L102.35 86.23 L102.80 81.57 L103.25 84.00 L103.70 83.23 L104.15 88.57 L104.60 82.86 L105.05 96.90 L105.50 92.28 L105.95 89.90 L106.40 88.07 L106.85 96.90 L107.30 95.64 L107.75 94.68 L108.20 88.07 L108.65 92.86 L109.10 95.08 L109.55 96.90 L110.00 90.91 L110.45 96.90 L110.90 96.84 L111.35 90.86 L111.80 85.61 L112.25 86.59 L112.70 90.63 L113.15 84.20 L113.60 80.25 L114.05 82.98 L114.50 77.46 L114.95 72.43 L115.40 70.42 L115.85 63.21 L116.30 64.41 L116.75 59.77 L117.20 54.35 L117.65 53.43 L118.10 51.93 L118.55 46.99 L119.00 51.87 L119.45 48.30 L119.90 41.51 L120.35 38.67 L120.80 30.89 L121.25 45.54 L121.70 24.91 L122.15 31.31 L122.60 21.92 L123.05 17.52 L123.50 24.37 L123.95 15.96 L124.40 13.05 L124.85 10.09 L125.30 9.28 L125.75 11.08 L126.20 3.40 L126.65 4.41 L127.10 2.54 L127.55 10.74 L128.00 7.57 L128.45 9.08 L128.90 0.40 L129.35 12.18 L129.80 9.02 L130.25 0.40 L130.70 0.40 L131.15 0.40 L131.60 0.40 L132.05 0.40 L132.50 9.92 L132.95 3.61 L133.40 1.33 L133.85 16.98 L134.30 10.70 L134.75 7.54 L135.20 10.92 L135.65 18.97 L136.10 18.32 L136.55 18.80 L137.00 26.40 L137.45 26.80 L137.90 22.42 L138.35 31.55 L138.80 28.79 L139.25 47.00 L139.70 39.96 L140.15 41.41 L140.60 48.26 L141.05 41.01 L141.50 47.49 L141.95 50.72 L142.40 52.62 L142.85 54.36 L143.30 62.97 L143.75 68.01 L144.20 63.36 L144.65 70.67 L145.10 78.42 L145.55 72.99 L146.00 82.89 L146.45 78.87 L146.90 76.79 L147.35 86.22 L147.80 90.74 L148.25 96.90 L148.70 96.53 L149.15 90.54 L149.60 92.99 L150.05 88.58 L150.50 93.46 L150.95 90.42 L151.40 94.81 L151.85 87.22 L152.30 96.90 L152.75 96.90 L153.20 96.90 L153.65 90.82 L154.10 96.90 L154.55 93.12 L155.00 91.72 L155.45 96.90 L155.90 96.80 L156.35 92.68 L156.80 91.30 L157.25 95.75 L157.70 88.78 L158.15 93.38 L158.60 89.04 L159.05 72.68 L159.50 79.23 L159.95 75.32 L160.40 71.33 L160.85 66.68 L161.30 75.86 L161.75 67.33 L162.20 58.58 L162.65 63.89 L163.10 59.61 L163.55 53.85 L164.00 44.20 L164.45 53.50 L164.90 35.45 L165.35 43.22 L165.80 33.57 L166.25 43.40 L166.70 36.28 L167.15 24.73 L167.60 27.76 L168.05 15.09 L168.50 20.76 L168.95 17.11 L169.40 18.27 L169.85 9.95 L170.30 15.74 L170.75 17.76 L171.20 5.33 L171.65 18.21 L172.10 0.40 L172.55 13.70 L173.00 0.40 L173.45 7.15 L173.90 0.40" fill="none" stroke="#36f836" stroke-width="1.0"/><line x1="0" x2="174" y1="48.65" y2="48.65" stroke="#d8d8d8" stroke-width="0.9"/><path d="M0.00 58.00L0.20 57.32M0.45 62.57L0.65 62.35M0.90 62.72L1.10 72.01M1.35 65.89L1.55 75.26M1.80 74.25L2.00 74.27M2.25 63.52L2.45 63.92M2.70 70.45L2.90 61.75M3.15 67.12L3.35 69.34M3.60 73.03L3.80 69.30M4.05 73.01L4.25 71.68M4.50 83.50L4.70 68.88M4.95 61.45L5.15 65.76M5.40 71.16L5.60 67.72M5.85 76.32L6.05 63.60M6.30 74.52L6.50 68.02M6.75 74.57L6.95 80.61M7.20 72.94L7.40 66.69M7.65 73.34L7.85 71.78M8.10 70.90L8.30 63.34M8.55 71.73L8.75 68.93M9.00 64.29L9.20 71.85M9.45 68.65L9.65 71.86M9.90 70.27L10.10 71.00M10.35 70.64L10.55 69.22M10.80 74.68L11.00 68.00M11.25 65.08L11.45 67.48M11.70 73.89L11.90 65.81M12.15 69.73L12.35 53.64M12.60 68.15L12.80 66.41M13.05 64.31L13.25 71.19M13.50 57.80L13.70 68.93M13.95 62.06L14.15 62.97M14.40 71.76L14.60 56.24M14.85 56.23L15.05 63.64M15.30 59.18L15.50 71.33M15.75 57.22L15.95 64.05M16.20 53.13L16.40 57.15M16.65 56.46L16.85 49.44M17.10 55.67L17.30 56.71M17.55 54.92L17.75 52.25M18.00 42.16L18.20 58.33M18.45 39.59L18.65 48.73M18.90 50.93L19.10 50.24M19.35 35.58L19.55 53.32M19.80 43.25L20.00 40.20M20.25 44.03L20.45 49.52M20.70 38.87L20.90 37.27M21.15 42.07L21.35 43.66M21.60 43.33L21.80 44.21M22.05 45.92L22.25 37.64M22.50 36.97L22.70 30.19M22.95 44.77L23.15 38.67M23.40 43.56L23.60 21.63M23.85 41.43L24.05 34.01M24.30 26.59L24.50 30.48M24.75 35.56L24.95 28.35M25.20 32.57L25.40 24.98M25.65 25.15L25.85 32.33M26.10 32.10L26.30 41.82M26.55 23.70L26.75 28.74M27.00 25.72L27.20 28.67M27.45 27.78L27.65 33.98M27.90 22.56L28.10 28.86M28.35 24.90L28.55 29.00M28.80 33.22L29.00 25.80M29.25 27.73L29.45 25.30M29.70 27.44L29.90 23.16M30.15 26.11L30.35 21.29M30.60 26.05L30.80 30.13M31.05 29.86L31.25 29.89M31.50 26.12L31.70 21.90M31.95 37.56L32.15 22.14M32.40 25.85L32.60 25.65M32.85 28.27L33.05 27.84M33.30 25.26L33.50 33.96M33.75 21.69L33.95 27.03M34.20 31.00L34.40 37.13M34.65 28.07L34.85 17.15M35.10 23.65L35.30 28.10M35.55 26.76L35.75 29.87M36.00 26.54L36.20 39.00M36.45 41.21L36.65 42.93M36.90 35.61L37.10 40.02M37.35 27.61L37.55 36.87M37.80 33.16L38.00 41.82M38.25 38.64L38.45 35.30M38.70 40.23L38.90 38.60M39.15 37.15L39.35 39.49M39.60 45.70L39.80 46.48M40.05 53.56L40.25 44.65M40.50 57.52L40.70 51.99M40.95 48.73L41.15 41.57M41.40 43.74L41.60 53.60M41.85 59.41L42.05 46.20M42.30 53.06L42.50 49.80M42.75 61.06L42.95 44.68M43.20 60.63L43.40 60.94M43.65 49.48L43.85 50.20M44.10 51.64L44.30 53.17M44.55 60.75L44.75 60.09M45.00 66.37L45.20 55.23M45.45 62.08L45.65 56.03M45.90 61.20L46.10 61.72M46.35 73.46L46.55 58.01M46.80 66.14L47.00 61.71M47.25 63.03L47.45 77.44M47.70 62.36L47.90 63.42M48.15 60.70L48.35 66.56M48.60 63.35L48.80 64.36M49.05 63.35L49.25 71.28M49.50 69.49L49.70 72.53M49.95 56.15L50.15 62.10M50.40 74.84L50.60 69.06M50.85 65.31L51.05 72.08M51.30 83.71L51.50 72.48M51.75 79.79L51.95 80.77M52.20 69.02L52.40 77.88M52.65 59.15L52.85 67.21M53.10 83.04L53.30 67.09M53.55 75.75L53.75 71.22M54.00 71.16L54.20 64.66M54.45 72.88L54.65 72.35M54.90 73.09L55.10 78.48M55.35 66.52L55.55 69.53M55.80 63.74L56.00 65.61M56.25 66.04L56.45 70.70M56.70 61.53L56.90 62.81M57.15 67.55L57.35 64.99M57.60 58.69L57.80 58.92M58.05 71.09L58.25 68.77M58.50 54.63L58.70 72.25M58.95 67.93L59.15 52.41M59.40 66.06L59.60 58.26M59.85 54.17L60.05 53.94M60.30 58.52L60.50 58.74M60.75 61.31L60.95 47.12M61.20 65.09L61.40 50.74M61.65 59.22L61.85 46.79M62.10 54.81L62.30 60.42M62.55 48.05L62.75 62.63M63.00 49.24L63.20 51.51M63.45 51.42L63.65 48.27M63.90 36.48L64.10 48.94M64.35 41.91L64.55 52.83M64.80 46.78L65.00 47.48M65.25 34.80L65.45 42.39M65.70 41.78L65.90 48.07M66.15 43.28L66.35 31.66M66.60 46.48L66.80 44.15M67.05 38.29L67.25 39.34M67.50 34.58L67.70 38.91M67.95 25.66L68.15 34.22M68.40 39.69L68.60 32.38M68.85 39.52L69.05 31.86M69.30 29.17L69.50 40.92M69.75 26.99L69.95 37.47M70.20 25.44L70.40 36.19M70.65 16.66L70.85 40.31M71.10 23.83L71.30 26.42M71.55 29.45L71.75 26.06M72.00 21.38L72.20 27.13M72.45 27.51L72.65 32.23M72.90 15.12L73.10 29.78M73.35 24.93L73.55 20.57M73.80 26.95L74.00 25.18M74.25 24.81L74.45 34.24M74.70 29.58L74.90 34.32M75.15 17.26L75.35 30.70M75.60 30.33L75.80 32.82M76.05 27.57L76.25 32.06M76.50 28.52L76.70 22.82M76.95 26.54L77.15 30.57M77.40 24.65L77.60 31.96M77.85 32.24L78.05 31.33M78.30 28.93L78.50 28.14M78.75 31.87L78.95 47.15M79.20 27.89L79.40 34.64M79.65 28.51L79.85 13.81M80.10 40.16L80.30 23.83M80.55 43.74L80.75 38.35M81.00 28.82L81.20 35.53M81.45 49.90L81.65 41.13M81.90 39.47L82.10 36.49M82.35 37.03L82.55 44.38M82.80 42.11L83.00 43.38M83.25 42.31L83.45 37.69M83.70 41.93L83.90 43.73M84.15 41.20L84.35 56.01M84.60 43.93L84.80 56.14M85.05 40.88L85.25 43.13M85.50 46.86L85.70 43.23M85.95 54.69L86.15 54.11M86.40 62.13L86.60 51.94M86.85 54.01L87.05 53.34M87.30 56.42L87.50 51.93M87.75 69.72L87.95 47.41M88.20 58.01L88.40 54.36M88.65 54.62L88.85 63.45M89.10 50.65L89.30 60.91M89.55 69.98L89.75 66.88M90.00 72.85L90.20 58.67M90.45 65.19L90.65 62.95M90.90 59.62L91.10 67.71M91.35 66.65L91.55 77.74M91.80 61.39L92.00 64.01M92.25 65.52L92.45 72.48M92.70 67.08L92.90 67.19M93.15 70.89L93.35 61.69M93.60 69.67L93.80 70.79M94.05 71.03L94.25 65.32M94.50 69.60L94.70 64.39M94.95 73.02L95.15 77.10M95.40 76.18L95.60 73.24M95.85 72.83L96.05 70.96M96.30 60.69L96.50 71.71M96.75 75.66L96.95 69.87M97.20 75.73L97.40 64.96M97.65 76.39L97.85 67.94M98.10 65.12L98.30 63.39M98.55 73.14L98.75 68.21M99.00 62.17L99.20 70.07M99.45 69.01L99.65 67.07M99.90 72.32L100.10 69.83M100.35 67.66L100.55 65.50M100.80 72.28L101.00 78.75M101.25 64.71L101.45 66.95M101.70 62.44L101.90 63.59M102.15 65.07L102.35 66.31M102.60 58.40L102.80 63.27M103.05 48.21L103.25 71.74M103.50 64.45L103.70 57.47M103.95 64.13L104.15 70.04M104.40 60.90L104.60 62.55M104.85 64.98L105.05 65.77M105.30 68.11L105.50 63.65M105.75 58.92L105.95 51.07M106.20 56.47L106.40 49.37M106.65 42.83L106.85 55.57M107.10 55.67L107.30 50.95M107.55 50.46L107.75 59.58M108.00 47.19L108.20 40.77M108.45 55.78L108.65 37.85M108.90 42.25L109.10 43.88M109.35 38.30L109.55 46.18M109.80 43.32L110.00 50.49M110.25 45.45L110.45 38.63M110.70 34.27L110.90 48.04M111.15 38.52L111.35 38.36M111.60 37.58L111.80 37.08M112.05 35.90L112.25 32.68M112.50 39.10L112.70 37.49M112.95 30.68L113.15 22.01M113.40 40.23L113.60 37.70M113.85 43.14L114.05 31.03M114.30 31.80L114.50 33.08M114.75 36.89L114.95 28.60M115.20 29.54L115.40 34.39M115.65 39.04L115.85 30.00M116.10 34.92L116.30 30.66M116.55 29.02L116.75 23.16M117.00 33.25L117.20 31.56M117.45 33.13L117.65 24.06M117.90 15.89L118.10 18.47M118.35 30.53L118.55 25.86M118.80 26.18L119.00 22.50M119.25 23.83L119.45 26.94M119.70 28.42L119.90 33.10M120.15 25.34L120.35 21.47M120.60 30.18L120.80 24.65M121.05 29.65L121.25 26.21M121.50 28.07L121.70 33.14M121.95 25.64L122.15 41.20M122.40 21.69L122.60 26.21M122.85 32.80L123.05 21.33M123.30 35.15L123.50 34.56M123.75 22.51L123.95 34.21M124.20 32.33L124.40 35.04M124.65 33.59L124.85 33.51M125.10 32.26L125.30 26.81M125.55 35.95L125.75 43.61M126.00 29.89L126.20 37.69M126.45 31.78L126.65 36.94M126.90 35.70L127.10 38.58M127.35 43.25L127.55 44.89M127.80 38.60L128.00 43.00M128.25 48.40L128.45 47.67M128.70 39.97L128.90 53.22M129.15 55.78L129.35 39.31M129.60 46.04L129.80 51.23M130.05 55.75L130.25 49.31M130.50 43.32L130.70 55.71M130.95 57.05L131.15 50.32M131.40 53.66L131.60 52.69M131.85 56.19L132.05 47.53M132.30 50.20L132.50 43.00M132.75 59.30L132.95 46.58M133.20 61.17L133.40 63.85M133.65 63.83L133.85 58.21M134.10 60.26L134.30 60.14M134.55 58.57L134.75 57.55M135.00 57.76L135.20 64.46M135.45 65.83L135.65 56.21M135.90 59.80L136.10 60.25M136.35 59.79L136.55 58.14M136.80 75.50L137.00 63.21M137.25 64.18L137.45 71.04M137.70 57.02L137.90 65.17M138.15 64.76L138.35 68.98M138.60 71.59L138.80 78.55M139.05 65.47L139.25 70.03M139.50 60.46L139.70 77.21M139.95 63.99L140.15 71.58M140.40 66.21L140.60 68.39M140.85 76.05L141.05 70.09M141.30 76.26L141.50 70.82M141.75 71.35L141.95 65.74M142.20 70.04L142.40 52.60M142.65 79.48L142.85 72.50M143.10 76.25L143.30 71.70M143.55 67.85L143.75 70.10M144.00 61.86L144.20 69.63M144.45 69.12L144.65 64.83M144.90 66.26L145.10 58.48M145.35 66.15L145.55 67.30M145.80 71.55L146.00 69.66M146.25 55.48L146.45 63.31M146.70 66.60L146.90 67.22M147.15 60.82L147.35 71.05M147.60 63.42L147.80 61.61M148.05 59.97L148.25 57.01M148.50 56.06L148.70 65.07M148.95 51.09L149.15 50.00M149.40 70.28L149.60 57.53M149.85 52.60L150.05 58.06M150.30 49.36L150.50 67.16M150.75 50.69L150.95 52.71M151.20 46.26L151.40 57.85M151.65 54.81L151.85 47.69M152.10 49.38L152.30 43.82M152.55 49.58L152.75 43.29M153.00 55.13L153.20 52.81M153.45 34.85L153.65 43.86M153.90 41.62L154.10 36.05M154.35 47.95L154.55 47.38M154.80 45.09L155.00 40.22M155.25 39.29L155.45 39.45M155.70 34.21L155.90 40.69M156.15 39.54L156.35 28.29M156.60 31.02L156.80 26.43M157.05 29.44L157.25 33.56M157.50 37.54L157.70 38.19M157.95 35.54L158.15 25.90M158.40 40.41L158.60 31.41M158.85 25.45L159.05 33.04M159.30 23.17L159.50 33.46M159.75 27.20L159.95 37.84M160.20 31.42L160.40 27.00M160.65 29.85L160.85 32.53M161.10 26.20L161.30 27.18M161.55 30.60L161.75 22.25M162.00 19.26L162.20 31.20M162.45 22.62L162.65 26.39M162.90 28.74L163.10 29.51M163.35 32.50L163.55 31.34M163.80 23.47L164.00 29.70M164.25 26.18L164.45 30.65M164.70 33.35L164.90 12.48M165.15 33.16L165.35 24.86M165.60 26.63L165.80 24.27M166.05 33.40L166.25 30.57M166.50 35.25L166.70 34.85M166.95 33.76L167.15 27.82M167.40 35.11L167.60 21.85M167.85 19.43L168.05 19.73M168.30 30.24L168.50 37.17M168.75 33.51L168.95 32.34M169.20 32.67L169.40 37.16M169.65 29.40L169.85 41.53M170.10 36.42L170.30 32.26M170.55 33.57L170.75 27.29M171.00 36.60L171.20 36.18M171.45 35.95L171.65 44.96M171.90 37.89L172.10 30.19M172.35 44.56L172.55 42.72M172.80 49.05L173.00 44.09M173.25 48.40L173.45 47.18M173.70 48.58L173.90 48.73" fill="none" stroke="#f5564a" stroke-width="1.2"/><path d="M0.20 57.32 L0.65 62.35 L1.10 72.01 L1.55 75.26 L2.00 74.27 L2.45 63.92 L2.90 61.75 L3.35 69.34 L3.80 69.30 L4.25 71.68 L4.70 68.88 L5.15 65.76 L5.60 67.72 L6.05 63.60 L6.50 68.02 L6.95 80.61 L7.40 66.69 L7.85 71.78 L8.30 63.34 L8.75 68.93 L9.20 71.85 L9.65 71.86 L10.10 71.00 L10.55 69.22 L11.00 68.00 L11.45 67.48 L11.90 65.81 L12.35 53.64 L12.80 66.41 L13.25 71.19 L13.70 68.93 L14.15 62.97 L14.60 56.24 L15.05 63.64 L15.50 71.33 L15.95 64.05 L16.40 57.15 L16.85 49.44 L17.30 56.71 L17.75 52.25 L18.20 58.33 L18.65 48.73 L19.10 50.24 L19.55 53.32 L20.00 40.20 L20.45 49.52 L20.90 37.27 L21.35 43.66 L21.80 44.21 L22.25 37.64 L22.70 30.19 L23.15 38.67 L23.60 21.63 L24.05 34.01 L24.50 30.48 L24.95 28.35 L25.40 24.98 L25.85 32.33 L26.30 41.82 L26.75 28.74 L27.20 28.67 L27.65 33.98 L28.10 28.86 L28.55 29.00 L29.00 25.80 L29.45 25.30 L29.90 23.16 L30.35 21.29 L30.80 30.13 L31.25 29.89 L31.70 21.90 L32.15 22.14 L32.60 25.65 L33.05 27.84 L33.50 33.96 L33.95 27.03 L34.40 37.13 L34.85 17.15 L35.30 28.10 L35.75 29.87 L36.20 39.00 L36.65 42.93 L37.10 40.02 L37.55 36.87 L38.00 41.82 L38.45 35.30 L38.90 38.60 L39.35 39.49 L39.80 46.48 L40.25 44.65 L40.70 51.99 L41.15 41.57 L41.60 53.60 L42.05 46.20 L42.50 49.80 L42.95 44.68 L43.40 60.94 L43.85 50.20 L44.30 53.17 L44.75 60.09 L45.20 55.23 L45.65 56.03 L46.10 61.72 L46.55 58.01 L47.00 61.71 L47.45 77.44 L47.90 63.42 L48.35 66.56 L48.80 64.36 L49.25 71.28 L49.70 72.53 L50.15 62.10 L50.60 69.06 L51.05 72.08 L51.50 72.48 L51.95 80.77 L52.40 77.88 L52.85 67.21 L53.30 67.09 L53.75 71.22 L54.20 64.66 L54.65 72.35 L55.10 78.48 L55.55 69.53 L56.00 65.61 L56.45 70.70 L56.90 62.81 L57.35 64.99 L57.80 58.92 L58.25 68.77 L58.70 72.25 L59.15 52.41 L59.60 58.26 L60.05 53.94 L60.50 58.74 L60.95 47.12 L61.40 50.74 L61.85 46.79 L62.30 60.42 L62.75 62.63 L63.20 51.51 L63.65 48.27 L64.10 48.94 L64.55 52.83 L65.00 47.48 L65.45 42.39 L65.90 48.07 L66.35 31.66 L66.80 44.15 L67.25 39.34 L67.70 38.91 L68.15 34.22 L68.60 32.38 L69.05 31.86 L69.50 40.92 L69.95 37.47 L70.40 36.19 L70.85 40.31 L71.30 26.42 L71.75 26.06 L72.20 27.13 L72.65 32.23 L73.10 29.78 L73.55 20.57 L74.00 25.18 L74.45 34.24 L74.90 34.32 L75.35 30.70 L75.80 32.82 L76.25 32.06 L76.70 22.82 L77.15 30.57 L77.60 31.96 L78.05 31.33 L78.50 28.14 L78.95 47.15 L79.40 34.64 L79.85 13.81 L80.30 23.83 L80.75 38.35 L81.20 35.53 L81.65 41.13 L82.10 36.49 L82.55 44.38 L83.00 43.38 L83.45 37.69 L83.90 43.73 L84.35 56.01 L84.80 56.14 L85.25 43.13 L85.70 43.23 L86.15 54.11 L86.60 51.94 L87.05 53.34 L87.50 51.93 L87.95 47.41 L88.40 54.36 L88.85 63.45 L89.30 60.91 L89.75 66.88 L90.20 58.67 L90.65 62.95 L91.10 67.71 L91.55 77.74 L92.00 64.01 L92.45 72.48 L92.90 67.19 L93.35 61.69 L93.80 70.79 L94.25 65.32 L94.70 64.39 L95.15 77.10 L95.60 73.24 L96.05 70.96 L96.50 71.71 L96.95 69.87 L97.40 64.96 L97.85 67.94 L98.30 63.39 L98.75 68.21 L99.20 70.07 L99.65 67.07 L100.10 69.83 L100.55 65.50 L101.00 78.75 L101.45 66.95 L101.90 63.59 L102.35 66.31 L102.80 63.27 L103.25 71.74 L103.70 57.47 L104.15 70.04 L104.60 62.55 L105.05 65.77 L105.50 63.65 L105.95 51.07 L106.40 49.37 L106.85 55.57 L107.30 50.95 L107.75 59.58 L108.20 40.77 L108.65 37.85 L109.10 43.88 L109.55 46.18 L110.00 50.49 L110.45 38.63 L110.90 48.04 L111.35 38.36 L111.80 37.08 L112.25 32.68 L112.70 37.49 L113.15 22.01 L113.60 37.70 L114.05 31.03 L114.50 33.08 L114.95 28.60 L115.40 34.39 L115.85 30.00 L116.30 30.66 L116.75 23.16 L117.20 31.56 L117.65 24.06 L118.10 18.47 L118.55 25.86 L119.00 22.50 L119.45 26.94 L119.90 33.10 L120.35 21.47 L120.80 24.65 L121.25 26.21 L121.70 33.14 L122.15 41.20 L122.60 26.21 L123.05 21.33 L123.50 34.56 L123.95 34.21 L124.40 35.04 L124.85 33.51 L125.30 26.81 L125.75 43.61 L126.20 37.69 L126.65 36.94 L127.10 38.58 L127.55 44.89 L128.00 43.00 L128.45 47.67 L128.90 53.22 L129.35 39.31 L129.80 51.23 L130.25 49.31 L130.70 55.71 L131.15 50.32 L131.60 52.69 L132.05 47.53 L132.50 43.00 L132.95 46.58 L133.40 63.85 L133.85 58.21 L134.30 60.14 L134.75 57.55 L135.20 64.46 L135.65 56.21 L136.10 60.25 L136.55 58.14 L137.00 63.21 L137.45 71.04 L137.90 65.17 L138.35 68.98 L138.80 78.55 L139.25 70.03 L139.70 77.21 L140.15 71.58 L140.60 68.39 L141.05 70.09 L141.50 70.82 L141.95 65.74 L142.40 52.60 L142.85 72.50 L143.30 71.70 L143.75 70.10 L144.20 69.63 L144.65 64.83 L145.10 58.48 L145.55 67.30 L146.00 69.66 L146.45 63.31 L146.90 67.22 L147.35 71.05 L147.80 61.61 L148.25 57.01 L148.70 65.07 L149.15 50.00 L149.60 57.53 L150.05 58.06 L150.50 67.16 L150.95 52.71 L151.40 57.85 L151.85 47.69 L152.30 43.82 L152.75 43.29 L153.20 52.81 L153.65 43.86 L154.10 36.05 L154.55 47.38 L155.00 40.22 L155.45 39.45 L155.90 40.69 L156.35 28.29 L156.80 26.43 L157.25 33.56 L157.70 38.19 L158.15 25.90 L158.60 31.41 L159.05 33.04 L159.50 33.46 L159.95 37.84 L160.40 27.00 L160.85 32.53 L161.30 27.18 L161.75 22.25 L162.20 31.20 L162.65 26.39 L163.10 29.51 L163.55 31.34 L164.00 29.70 L164.45 30.65 L164.90 12.48 L165.35 24.86 L165.80 24.27 L166.25 30.57 L166.70 34.85 L167.15 27.82 L167.60 21.85 L168.05 19.73 L168.50 37.17 L168.95 32.34 L169.40 37.16 L169.85 41.53 L170.30 32.26 L170.75 27.29 L171.20 36.18 L171.65 44.96 L172.10 30.19 L172.55 42.72 L173.00 44.09 L173.45 47.18 L173.90 48.73" fill="none" stroke="#f5564a" stroke-width="1.0"/></svg>
<div class="t" style="left:584.00px;width:30px;text-align:right;top:160.04px;font-size:6.8px;line-height:7.813px;color:#1e1e1e;">200</div>
<div class="a" style="left:615px;top:163px;width:3px;height:1px;background:#333;"></div>
<div class="t" style="left:584.00px;width:30px;text-align:right;top:172.04px;font-size:6.8px;line-height:7.813px;color:#1e1e1e;">150</div>
<div class="a" style="left:615px;top:175px;width:3px;height:1px;background:#333;"></div>
<div class="t" style="left:584.00px;width:30px;text-align:right;top:184.04px;font-size:6.8px;line-height:7.813px;color:#1e1e1e;">100</div>
<div class="a" style="left:615px;top:187px;width:3px;height:1px;background:#333;"></div>
<div class="t" style="left:584.00px;width:30px;text-align:right;top:196.04px;font-size:6.8px;line-height:7.813px;color:#1e1e1e;">50</div>
<div class="a" style="left:615px;top:199px;width:3px;height:1px;background:#333;"></div>
<div class="t" style="left:584.00px;width:30px;text-align:right;top:208.04px;font-size:6.8px;line-height:7.813px;color:#1e1e1e;">0</div>
<div class="a" style="left:615px;top:211px;width:3px;height:1px;background:#333;"></div>
<div class="t" style="left:584.00px;width:30px;text-align:right;top:220.04px;font-size:6.8px;line-height:7.813px;color:#1e1e1e;">-50</div>
<div class="a" style="left:615px;top:223px;width:3px;height:1px;background:#333;"></div>
<div class="t" style="left:584.00px;width:30px;text-align:right;top:232.04px;font-size:6.8px;line-height:7.813px;color:#1e1e1e;">-100</div>
<div class="a" style="left:615px;top:235px;width:3px;height:1px;background:#333;"></div>
<div class="t" style="left:584.00px;width:30px;text-align:right;top:244.04px;font-size:6.8px;line-height:7.813px;color:#1e1e1e;">-150</div>
<div class="a" style="left:615px;top:247px;width:3px;height:1px;background:#333;"></div>
<div class="t" style="left:584.00px;width:30px;text-align:right;top:256.04px;font-size:6.8px;line-height:7.813px;color:#1e1e1e;">-200</div>
<div class="a" style="left:615px;top:259px;width:3px;height:1px;background:#333;"></div>
<div class="t" style="left:604.50px;width:30px;text-align:center;top:263.94px;font-size:6.8px;line-height:7.813px;color:#1e1e1e;">0</div>
<div class="a" style="left:620px;top:260px;width:1px;height:3px;background:#444;"></div>
<div class="t" style="left:631.30px;width:30px;text-align:center;top:263.94px;font-size:6.8px;line-height:7.813px;color:#1e1e1e;">0,02</div>
<div class="a" style="left:646px;top:260px;width:1px;height:3px;background:#444;"></div>
<div class="t" style="left:658.10px;width:30px;text-align:center;top:263.94px;font-size:6.8px;line-height:7.813px;color:#1e1e1e;">0,04</div>
<div class="a" style="left:673px;top:260px;width:1px;height:3px;background:#444;"></div>
<div class="t" style="left:684.90px;width:30px;text-align:center;top:263.94px;font-size:6.8px;line-height:7.813px;color:#1e1e1e;">0,06</div>
<div class="a" style="left:700px;top:260px;width:1px;height:3px;background:#444;"></div>
<div class="t" style="left:711.70px;width:30px;text-align:center;top:263.94px;font-size:6.8px;line-height:7.813px;color:#1e1e1e;">0,08</div>
<div class="a" style="left:727px;top:260px;width:1px;height:3px;background:#444;"></div>
<div class="t" style="left:738.50px;width:30px;text-align:center;top:263.94px;font-size:6.8px;line-height:7.813px;color:#1e1e1e;">0,1</div>
<div class="a" style="left:754px;top:260px;width:1px;height:3px;background:#444;"></div>
<div class="t" style="left:765.30px;width:30px;text-align:center;top:263.94px;font-size:6.8px;line-height:7.813px;color:#1e1e1e;">0,12</div>
<div class="a" style="left:780px;top:260px;width:1px;height:3px;background:#444;"></div>
<div class="t" style="left:495.50px;top:207.04px;width:200px;text-align:center;font-size:6.6px;line-height:7.92px;color:#1e1e1e;transform:rotate(-90deg);transform-origin:100px 3.96px;">Acceleration [m/s&#178;]</div>
<svg class="a" style="left:577px;top:284.6px;" width="163.7" height="142.4" viewBox="0 0 163.7 142.4"><rect width="163.7" height="142.4" fill="#828282"/><circle cx="81.85" cy="72.50" r="15.5" fill="none" stroke="#6a6a6a" stroke-width="0.9"/><circle cx="81.85" cy="72.50" r="31" fill="none" stroke="#6a6a6a" stroke-width="0.9"/><circle cx="81.85" cy="72.50" r="46.5" fill="none" stroke="#6a6a6a" stroke-width="0.9"/><circle cx="81.85" cy="72.50" r="61.6" fill="none" stroke="#6a6a6a" stroke-width="0.9"/><line x1="81.85" y1="72.50" x2="143.45" y2="72.50" stroke="#6a6a6a" stroke-width="0.9"/><line x1="96.82" y1="68.49" x2="141.35" y2="56.56" stroke="#6a6a6a" stroke-width="0.9"/><line x1="95.27" y1="64.75" x2="135.20" y2="41.70" stroke="#6a6a6a" stroke-width="0.9"/><line x1="92.81" y1="61.54" x2="125.41" y2="28.94" stroke="#6a6a6a" stroke-width="0.9"/><line x1="89.60" y1="59.08" x2="112.65" y2="19.15" stroke="#6a6a6a" stroke-width="0.9"/><line x1="85.86" y1="57.53" x2="97.79" y2="13.00" stroke="#6a6a6a" stroke-width="0.9"/><line x1="81.85" y1="72.50" x2="81.85" y2="10.90" stroke="#6a6a6a" stroke-width="0.9"/><line x1="77.84" y1="57.53" x2="65.91" y2="13.00" stroke="#6a6a6a" stroke-width="0.9"/><line x1="74.10" y1="59.08" x2="51.05" y2="19.15" stroke="#6a6a6a" stroke-width="0.9"/><line x1="70.89" y1="61.54" x2="38.29" y2="28.94" stroke="#6a6a6a" stroke-width="0.9"/><line x1="68.43" y1="64.75" x2="28.50" y2="41.70" stroke="#6a6a6a" stroke-width="0.9"/><line x1="66.88" y1="68.49" x2="22.35" y2="56.56" stroke="#6a6a6a" stroke-width="0.9"/><line x1="81.85" y1="72.50" x2="20.25" y2="72.50" stroke="#6a6a6a" stroke-width="0.9"/><line x1="66.88" y1="76.51" x2="22.35" y2="88.44" stroke="#6a6a6a" stroke-width="0.9"/><line x1="68.43" y1="80.25" x2="28.50" y2="103.30" stroke="#6a6a6a" stroke-width="0.9"/><line x1="70.89" y1="83.46" x2="38.29" y2="116.06" stroke="#6a6a6a" stroke-width="0.9"/><line x1="74.10" y1="85.92" x2="51.05" y2="125.85" stroke="#6a6a6a" stroke-width="0.9"/><line x1="77.84" y1="87.47" x2="65.91" y2="132.00" stroke="#6a6a6a" stroke-width="0.9"/><line x1="81.85" y1="72.50" x2="81.85" y2="134.10" stroke="#6a6a6a" stroke-width="0.9"/><line x1="85.86" y1="87.47" x2="97.79" y2="132.00" stroke="#6a6a6a" stroke-width="0.9"/><line x1="89.60" y1="85.92" x2="112.65" y2="125.85" stroke="#6a6a6a" stroke-width="0.9"/><line x1="92.81" y1="83.46" x2="125.41" y2="116.06" stroke="#6a6a6a" stroke-width="0.9"/><line x1="95.27" y1="80.25" x2="135.20" y2="103.30" stroke="#6a6a6a" stroke-width="0.9"/><line x1="96.82" y1="76.51" x2="141.35" y2="88.44" stroke="#6a6a6a" stroke-width="0.9"/><line x1="87.80" x2="146.10" y1="9.80" y2="9.80" stroke="#4a4a4a" stroke-width="1"/><line x1="84.40" x2="145.00" y1="25.40" y2="25.40" stroke="#4a4a4a" stroke-width="1"/><line x1="84.40" x2="145.00" y1="40.70" y2="40.70" stroke="#4a4a4a" stroke-width="1"/><line x1="85.20" x2="137.00" y1="56.40" y2="56.40" stroke="#4a4a4a" stroke-width="1"/><line x1="81.85" y1="72.50" x2="45.60" y2="55.70" stroke="#dcdc40" stroke-width="1.1"/></svg>
<div class="t" style="left:647.00px;width:20px;text-align:center;top:287.05px;font-size:6.6px;line-height:7.583px;color:#1e1e1e;">90</div>
<div class="t" style="left:647.00px;width:20px;text-align:center;top:419.95px;font-size:6.6px;line-height:7.583px;color:#1e1e1e;">270</div>
<div class="t" style="left:576.00px;width:20px;text-align:right;top:353.85px;font-size:6.6px;line-height:7.583px;color:#1e1e1e;">180</div>
<div class="t" style="left:722.50px;top:353.85px;font-size:6.6px;line-height:7.583px;color:#1e1e1e;">0</div>
<div class="t" style="left:722.50px;top:337.75px;font-size:6.6px;line-height:7.583px;color:#1e1e1e;">50</div>
<div class="t" style="left:722.50px;top:322.05px;font-size:6.6px;line-height:7.583px;color:#1e1e1e;">100</div>
<div class="t" style="left:722.50px;top:306.75px;font-size:6.6px;line-height:7.583px;color:#1e1e1e;">150</div>
<div class="t" style="left:722.50px;top:291.15px;font-size:6.6px;line-height:7.583px;color:#1e1e1e;">200</div>
<div class="t" style="left:635.00px;top:315.64px;width:200px;text-align:center;font-size:6.6px;line-height:7.92px;color:#1e1e1e;transform:rotate(-90deg);transform-origin:100px 3.96px;">Acceleration [m/s&#178;]</div>
<div class="a" style="left:740.7px;top:284.6px;width:1.3px;height:142.4px;background:#e4e4e4;"></div>
<div class="a" style="left:742px;top:284.6px;width:51px;height:142.4px;background:#bcbcbc;"></div>
<div class="a" style="left:743.6px;top:292.6px;width:8.6px;height:71.6px;background:#cacaca;box-sizing:border-box;border-top:1px solid #e6e6e6;border-left:1px solid #e6e6e6;border-bottom:1px solid #6e6e6e;border-right:1px solid #6e6e6e;"></div>
<div class="t" style="left:648.00px;top:324.44px;width:200px;text-align:center;font-size:6.6px;line-height:7.92px;color:#1e1e1e;transform:rotate(-90deg);transform-origin:100px 3.96px;">Channel 1 ( 1st Plane)</div>
<div class="a" style="left:746.5px;top:375.8px;width:7.2px;height:6.8px;background:#f2f000;box-sizing:border-box;border-top:1px solid #e8e8e8;border-left:1px solid #e8e8e8;border-bottom:1px solid #707070;border-right:1px solid #707070;"></div>
<div class="t" style="left:757.00px;top:375.95px;font-size:6.6px;line-height:7.583px;color:#1e1e1e;">Online</div>
<div class="a" style="left:746.5px;top:386.88px;width:7.2px;height:6.8px;background:#0a46d8;box-sizing:border-box;border-top:1px solid #e8e8e8;border-left:1px solid #e8e8e8;border-bottom:1px solid #707070;border-right:1px solid #707070;"></div>
<div class="t" style="left:757.00px;top:387.03px;font-size:6.6px;line-height:7.583px;color:#1e1e1e;">Initial Run</div>
<div class="a" style="left:746.5px;top:397.96000000000004px;width:7.2px;height:6.8px;background:#66e622;box-sizing:border-box;border-top:1px solid #e8e8e8;border-left:1px solid #e8e8e8;border-bottom:1px solid #707070;border-right:1px solid #707070;"></div>
<div class="t" style="left:757.00px;top:398.11px;font-size:6.6px;line-height:7.583px;color:#1e1e1e;">Test Run 1</div>
<div class="a" style="left:746.5px;top:409.04px;width:7.2px;height:6.8px;background:#22e6f0;box-sizing:border-box;border-top:1px solid #e8e8e8;border-left:1px solid #e8e8e8;border-bottom:1px solid #707070;border-right:1px solid #707070;"></div>
<div class="t" style="left:757.00px;top:409.19px;font-size:6.6px;line-height:7.583px;color:#1e1e1e;">Test Run 2</div>
<div class="a" style="left:746.5px;top:420.12px;width:7.2px;height:6.8px;background:#ee1010;box-sizing:border-box;border-top:1px solid #e8e8e8;border-left:1px solid #e8e8e8;border-bottom:1px solid #707070;border-right:1px solid #707070;"></div>
<div class="t" style="left:757.00px;top:420.27px;font-size:6.6px;line-height:7.583px;color:#1e1e1e;">Test Run</div>
<div class="a" style="left:577px;top:427px;width:216px;height:1px;background:#8a8a8a;"></div>
<div class="a" style="left:577px;top:428px;width:216px;height:1.3px;background:#dedede;"></div>
<div class="a" style="left:578.8px;top:431.3px;width:63px;height:104.6px;background:None;box-sizing:border-box;border-top:1px solid #dadada;border-left:1px solid #dadada;border-bottom:1px solid #8a8a8a;border-right:1px solid #8a8a8a;"></div>
<div class="a" style="left:579.8px;top:432.3px;width:61px;height:102.6px;background:None;box-sizing:border-box;border-top:1px solid #8a8a8a;border-left:1px solid #8a8a8a;border-bottom:1px solid #dadada;border-right:1px solid #dadada;"></div>
<div class="a" style="left:588.5px;top:434.5px;width:50px;height:99.5px;background:None;box-sizing:border-box;border-top:1px solid #1e1e1e;border-left:1px solid #1e1e1e;border-bottom:1px solid #1e1e1e;border-right:1px solid #1e1e1e;"></div>
<div class="a" style="left:588.5px;top:483.8px;width:50px;height:1px;background:#1e1e1e;"></div>
<div class="a" style="left:574.2px;top:442.9px;width:7.4px;height:35.6px;background:#c6c6c6;box-sizing:border-box;border-top:1px solid #e4e4e4;border-left:1px solid #e4e4e4;border-bottom:1px solid #6e6e6e;border-right:1px solid #6e6e6e;"></div>
<div class="t" style="left:478.20px;top:456.56px;width:200px;text-align:center;font-size:6.9px;line-height:8.28px;color:#1e1e1e;transform:rotate(-90deg);transform-origin:100px 4.14px;">Initial Run</div>
<div class="a" style="left:583.6px;top:440.7px;width:8.4px;height:35.7px;background:#c6c6c6;box-sizing:border-box;border-top:1px solid #e4e4e4;border-left:1px solid #e4e4e4;border-bottom:1px solid #6e6e6e;border-right:1px solid #6e6e6e;"></div>
<div class="t" style="left:488.10px;top:454.41px;width:200px;text-align:center;font-size:6.9px;line-height:8.28px;color:#1e1e1e;transform:rotate(-90deg);transform-origin:100px 4.14px;">1st Plane</div>
<div class="a" style="left:583.6px;top:488px;width:8.4px;height:41px;background:#c6c6c6;box-sizing:border-box;border-top:1px solid #e4e4e4;border-left:1px solid #e4e4e4;border-bottom:1px solid #6e6e6e;border-right:1px solid #6e6e6e;"></div>
<div class="t" style="left:488.10px;top:504.36px;width:200px;text-align:center;font-size:6.9px;line-height:8.28px;color:#1e1e1e;transform:rotate(-90deg);transform-origin:100px 4.14px;">2nd Plane</div>
<div class="t" style="left:596.30px;top:436.85px;font-size:6.6px;line-height:7.583px;color:#1e1e1e;">Magnit. [m/s&#178;]</div>
<div class="a" style="left:597.3px;top:446px;width:33.6px;height:10.5px;background:#d6d6d6;box-sizing:border-box;border-top:1px solid #8a8a8a;border-left:1px solid #8a8a8a;border-bottom:1px solid #e6e6e6;border-right:1px solid #e6e6e6;border-top-width:2px;border-left-width:2px;"></div>
<div class="t" style="left:599.90px;top:448.19px;font-size:6.8px;line-height:7.813px;color:#1e1e1e;">125,92</div>
<div class="t" style="left:596.30px;top:460.15px;font-size:6.6px;line-height:7.583px;color:#1e1e1e;">Phase [&#176;]</div>
<div class="a" style="left:597.3px;top:469.1px;width:33.6px;height:10.5px;background:#d6d6d6;box-sizing:border-box;border-top:1px solid #8a8a8a;border-left:1px solid #8a8a8a;border-bottom:1px solid #e6e6e6;border-right:1px solid #e6e6e6;border-top-width:2px;border-left-width:2px;"></div>
<div class="t" style="left:599.90px;top:471.29px;font-size:6.8px;line-height:7.813px;color:#1e1e1e;">154,82</div>
<div class="t" style="left:596.30px;top:488.55px;font-size:6.6px;line-height:7.583px;color:#1e1e1e;">Magnit. [m/s&#178;]</div>
<div class="a" style="left:597.3px;top:497.5px;width:33.6px;height:10.5px;background:#d6d6d6;box-sizing:border-box;border-top:1px solid #8a8a8a;border-left:1px solid #8a8a8a;border-bottom:1px solid #e6e6e6;border-right:1px solid #e6e6e6;border-top-width:2px;border-left-width:2px;"></div>
<div class="t" style="left:599.90px;top:499.69px;font-size:6.8px;line-height:7.813px;color:#1e1e1e;">251,74</div>
<div class="t" style="left:596.30px;top:509.55px;font-size:6.6px;line-height:7.583px;color:#1e1e1e;">Phase [&#176;]</div>
<div class="a" style="left:597.3px;top:518.5px;width:33.6px;height:10.5px;background:#d6d6d6;box-sizing:border-box;border-top:1px solid #8a8a8a;border-left:1px solid #8a8a8a;border-bottom:1px solid #e6e6e6;border-right:1px solid #e6e6e6;border-top-width:2px;border-left-width:2px;"></div>
<div class="t" style="left:599.90px;top:520.69px;font-size:6.8px;line-height:7.813px;color:#1e1e1e;">235,02</div>
<div class="a" style="left:653px;top:431.3px;width:118px;height:104.7px;background:None;box-sizing:border-box;border-top:1px solid #dadada;border-left:1px solid #dadada;border-bottom:1px solid #8a8a8a;border-right:1px solid #8a8a8a;"></div>
<div class="a" style="left:654px;top:432.3px;width:116px;height:102.7px;background:None;box-sizing:border-box;border-top:1px solid #8a8a8a;border-left:1px solid #8a8a8a;border-bottom:1px solid #dadada;border-right:1px solid #dadada;"></div>
<div class="a" style="left:661.7px;top:434.5px;width:107.6px;height:99.8px;background:None;box-sizing:border-box;border-top:1px solid #1e1e1e;border-left:1px solid #1e1e1e;border-bottom:1px solid #1e1e1e;border-right:1px solid #1e1e1e;"></div>
<div class="a" style="left:661.7px;top:484.9px;width:107.6px;height:1px;background:#1e1e1e;"></div>
<div class="a" style="left:646.7px;top:441.4px;width:8.4px;height:39.9px;background:#c6c6c6;box-sizing:border-box;border-top:1px solid #e4e4e4;border-left:1px solid #e4e4e4;border-bottom:1px solid #6e6e6e;border-right:1px solid #6e6e6e;"></div>
<div class="t" style="left:551.20px;top:457.21px;width:200px;text-align:center;font-size:6.9px;line-height:8.28px;color:#1e1e1e;transform:rotate(-90deg);transform-origin:100px 4.14px;">Test Run 1</div>
<div class="a" style="left:656.8px;top:441.8px;width:8.8px;height:34.7px;background:#c6c6c6;box-sizing:border-box;border-top:1px solid #e4e4e4;border-left:1px solid #e4e4e4;border-bottom:1px solid #6e6e6e;border-right:1px solid #6e6e6e;"></div>
<div class="t" style="left:561.50px;top:455.01px;width:200px;text-align:center;font-size:6.9px;line-height:8.28px;color:#1e1e1e;transform:rotate(-90deg);transform-origin:100px 4.14px;">1st Plane</div>
<div class="a" style="left:656.8px;top:492.3px;width:8.8px;height:36.7px;background:#c6c6c6;box-sizing:border-box;border-top:1px solid #e4e4e4;border-left:1px solid #e4e4e4;border-bottom:1px solid #6e6e6e;border-right:1px solid #6e6e6e;"></div>
<div class="t" style="left:561.50px;top:506.51px;width:200px;text-align:center;font-size:6.9px;line-height:8.28px;color:#1e1e1e;transform:rotate(-90deg);transform-origin:100px 4.14px;">2nd Plane</div>
<div class="t" style="left:671.10px;top:437.55px;font-size:6.6px;line-height:7.583px;color:#1e1e1e;">Weight Test [g]</div>
<div class="a" style="left:671.1px;top:445px;width:6.7px;height:11.5px;background:#d0d0d0;box-sizing:border-box;border-top:1px solid #eeeeee;border-left:1px solid #eeeeee;border-bottom:1px solid #707070;border-right:1px solid #707070;border-radius:3.2px;"></div>
<div class="a" style="left:678.9px;top:446px;width:40.6px;height:10.5px;background:#fafafa;box-sizing:border-box;border-top:1px solid #8a8a8a;border-left:1px solid #8a8a8a;border-bottom:1px solid #e6e6e6;border-right:1px solid #e6e6e6;border-top-width:2px;border-left-width:2px;"></div>
<div class="t" style="left:681.50px;top:448.19px;font-size:6.8px;line-height:7.813px;color:#1e1e1e;">4,7</div>
<div class="t" style="left:671.10px;top:460.25px;font-size:6.6px;line-height:7.583px;color:#1e1e1e;">Position Test [&#176;]</div>
<div class="a" style="left:671.1px;top:468.3px;width:6.7px;height:11.5px;background:#d0d0d0;box-sizing:border-box;border-top:1px solid #eeeeee;border-left:1px solid #eeeeee;border-bottom:1px solid #707070;border-right:1px solid #707070;border-radius:3.2px;"></div>
<div class="a" style="left:678.9px;top:469.1px;width:40.6px;height:10.1px;background:#fafafa;box-sizing:border-box;border-top:1px solid #8a8a8a;border-left:1px solid #8a8a8a;border-bottom:1px solid #e6e6e6;border-right:1px solid #e6e6e6;border-top-width:2px;border-left-width:2px;"></div>
<div class="t" style="left:681.50px;top:471.09px;font-size:6.8px;line-height:7.813px;color:#1e1e1e;">168</div>
<div class="t" style="left:726.80px;top:437.55px;font-size:6.6px;line-height:7.583px;color:#1e1e1e;">Magnit. [m/s&#178;]</div>
<div class="a" style="left:727.9px;top:446px;width:33px;height:10.5px;background:#d6d6d6;box-sizing:border-box;border-top:1px solid #8a8a8a;border-left:1px solid #8a8a8a;border-bottom:1px solid #e6e6e6;border-right:1px solid #e6e6e6;border-top-width:2px;border-left-width:2px;"></div>
<div class="t" style="left:730.50px;top:448.19px;font-size:6.8px;line-height:7.813px;color:#1e1e1e;">125,56</div>
<div class="t" style="left:726.80px;top:460.25px;font-size:6.6px;line-height:7.583px;color:#1e1e1e;">Phase [&#176;]</div>
<div class="a" style="left:727.9px;top:469.1px;width:33px;height:10.1px;background:#d6d6d6;box-sizing:border-box;border-top:1px solid #8a8a8a;border-left:1px solid #8a8a8a;border-bottom:1px solid #e6e6e6;border-right:1px solid #e6e6e6;border-top-width:2px;border-left-width:2px;"></div>
<div class="t" style="left:730.50px;top:471.09px;font-size:6.8px;line-height:7.813px;color:#1e1e1e;">154,97</div>
<div class="t" style="left:726.80px;top:488.55px;font-size:6.6px;line-height:7.583px;color:#1e1e1e;">Magnit. [m/s&#178;]</div>
<div class="a" style="left:727.9px;top:497.5px;width:33px;height:10.1px;background:#d6d6d6;box-sizing:border-box;border-top:1px solid #8a8a8a;border-left:1px solid #8a8a8a;border-bottom:1px solid #e6e6e6;border-right:1px solid #e6e6e6;border-top-width:2px;border-left-width:2px;"></div>
<div class="t" style="left:730.50px;top:499.49px;font-size:6.8px;line-height:7.813px;color:#1e1e1e;">251,76</div>
<div class="t" style="left:726.80px;top:509.65px;font-size:6.6px;line-height:7.583px;color:#1e1e1e;">Phase [&#176;]</div>
<div class="a" style="left:727.9px;top:519px;width:33px;height:10.5px;background:#d6d6d6;box-sizing:border-box;border-top:1px solid #8a8a8a;border-left:1px solid #8a8a8a;border-bottom:1px solid #e6e6e6;border-right:1px solid #e6e6e6;border-top-width:2px;border-left-width:2px;"></div>
<div class="t" style="left:730.50px;top:521.19px;font-size:6.8px;line-height:7.813px;color:#1e1e1e;">235,04</div>
<div class="a" style="left:338px;top:23px;width:240px;height:432px;background:#b9b9b9;"></div>
<div class="a" style="left:345px;top:29.2px;width:163px;height:17.6px;background:#d3d3d3;box-sizing:border-box;border-top:1px solid #8e8e8e;border-left:1px solid #8e8e8e;border-bottom:1px solid #dcdcdc;border-right:1px solid #dcdcdc;border-top-width:2px;border-left-width:2px;"></div>
<div class="t" style="left:347.30px;top:32.26px;font-size:11.75px;line-height:13.501px;color:#111;transform:scaleY(1.1);-webkit-text-stroke:0.25px #111;">Envelope Analysis</div>
<div class="t" style="left:512.30px;top:39.39px;font-size:6.35px;line-height:7.296px;color:#1e1e1e;">Channel</div>
<div class="a" style="left:512px;top:46.6px;width:62.5px;height:10.6px;box-sizing:border-box;background:linear-gradient(180deg,#dcdcdc,#d2d2d2);border-top:1px solid #e6e6e6;border-left:1px solid #e0e0e0;border-bottom:1px solid #7e7e7e;border-right:2px solid #7a7a7a;"></div>
<div class="a" style="left:560.0px;top:47.6px;width:12px;height:8.6px;background:#cdcdcd;"></div>
<svg class="a" style="left:560.0px;top:46.6px;" width="12" height="10.6" viewBox="0 0 12 10.6"><path d="M2.6 3.40 H10.2" stroke="#555" stroke-width="1"/><path d="M2.6 3.40 L6.3 7.50" stroke="#666" stroke-width="0.9"/><path d="M10.2 3.40 L6.3 7.50" stroke="#e2e2e2" stroke-width="0.8"/></svg>
<div class="t" style="left:514.00px;top:48.79px;font-size:6.35px;line-height:7.296px;color:#1e1e1e;">Channel 1</div>
<div class="a" style="left:343.5px;top:64px;width:234.5px;height:348.5px;background:#c2c2c2;box-sizing:border-box;border-top:1px solid #d6d6d6;border-left:1px solid #d8d8d8;border-bottom:1px solid #8c8c8c;border-right:1px solid #c2c2c2;"></div>
<div class="a" style="left:344.5px;top:65px;width:5px;height:347px;background:#d2d2d2;"></div>
<svg class="a" style="left:386px;top:70px;" width="191.5" height="320.5" viewBox="0 0 191.5 320.5"><rect width="191.5" height="320.5" fill="#000"/><line x1="0" x2="191.5" y1="315.50" y2="315.50" stroke="#142214" stroke-width="1"/><line x1="0" x2="191.5" y1="311.50" y2="311.50" stroke="#142214" stroke-width="1"/><line x1="0" x2="191.5" y1="306.50" y2="306.50" stroke="#142214" stroke-width="1"/><line x1="0" x2="191.5" y1="296.50" y2="296.50" stroke="#142214" stroke-width="1"/><line x1="0" x2="191.5" y1="292.50" y2="292.50" stroke="#142214" stroke-width="1"/><line x1="0" x2="191.5" y1="287.50" y2="287.50" stroke="#142214" stroke-width="1"/><line x1="0" x2="191.5" y1="278.50" y2="278.50" stroke="#142214" stroke-width="1"/><line x1="0" x2="191.5" y1="273.50" y2="273.50" stroke="#142214" stroke-width="1"/><line x1="0" x2="191.5" y1="268.50" y2="268.50" stroke="#142214" stroke-width="1"/><line x1="0" x2="191.5" y1="259.50" y2="259.50" stroke="#142214" stroke-width="1"/><line x1="0" x2="191.5" y1="254.50" y2="254.50" stroke="#142214" stroke-width="1"/><line x1="0" x2="191.5" y1="249.50" y2="249.50" stroke="#142214" stroke-width="1"/><line x1="0" x2="191.5" y1="240.50" y2="240.50" stroke="#142214" stroke-width="1"/><line x1="0" x2="191.5" y1="235.50" y2="235.50" stroke="#142214" stroke-width="1"/><line x1="0" x2="191.5" y1="231.50" y2="231.50" stroke="#142214" stroke-width="1"/><line x1="0" x2="191.5" y1="221.50" y2="221.50" stroke="#142214" stroke-width="1"/><line x1="0" x2="191.5" y1="216.50" y2="216.50" stroke="#142214" stroke-width="1"/><line x1="0" x2="191.5" y1="212.50" y2="212.50" stroke="#142214" stroke-width="1"/><line x1="0" x2="191.5" y1="202.50" y2="202.50" stroke="#142214" stroke-width="1"/><line x1="0" x2="191.5" y1="198.50" y2="198.50" stroke="#142214" stroke-width="1"/><line x1="0" x2="191.5" y1="193.50" y2="193.50" stroke="#142214" stroke-width="1"/><line x1="0" x2="191.5" y1="184.50" y2="184.50" stroke="#142214" stroke-width="1"/><line x1="0" x2="191.5" y1="179.50" y2="179.50" stroke="#142214" stroke-width="1"/><line x1="0" x2="191.5" y1="174.50" y2="174.50" stroke="#142214" stroke-width="1"/><line x1="0" x2="191.5" y1="165.50" y2="165.50" stroke="#142214" stroke-width="1"/><line x1="0" x2="191.5" y1="160.50" y2="160.50" stroke="#142214" stroke-width="1"/><line x1="0" x2="191.5" y1="155.50" y2="155.50" stroke="#142214" stroke-width="1"/><line x1="0" x2="191.5" y1="146.50" y2="146.50" stroke="#142214" stroke-width="1"/><line x1="0" x2="191.5" y1="141.50" y2="141.50" stroke="#142214" stroke-width="1"/><line x1="0" x2="191.5" y1="137.50" y2="137.50" stroke="#142214" stroke-width="1"/><line x1="0" x2="191.5" y1="127.50" y2="127.50" stroke="#142214" stroke-width="1"/><line x1="0" x2="191.5" y1="122.50" y2="122.50" stroke="#142214" stroke-width="1"/><line x1="0" x2="191.5" y1="118.50" y2="118.50" stroke="#142214" stroke-width="1"/><line x1="0" x2="191.5" y1="108.50" y2="108.50" stroke="#142214" stroke-width="1"/><line x1="0" x2="191.5" y1="104.50" y2="104.50" stroke="#142214" stroke-width="1"/><line x1="0" x2="191.5" y1="99.50" y2="99.50" stroke="#142214" stroke-width="1"/><line x1="0" x2="191.5" y1="89.50" y2="89.50" stroke="#142214" stroke-width="1"/><line x1="0" x2="191.5" y1="85.50" y2="85.50" stroke="#142214" stroke-width="1"/><line x1="0" x2="191.5" y1="80.50" y2="80.50" stroke="#142214" stroke-width="1"/><line x1="0" x2="191.5" y1="71.50" y2="71.50" stroke="#142214" stroke-width="1"/><line x1="0" x2="191.5" y1="66.50" y2="66.50" stroke="#142214" stroke-width="1"/><line x1="0" x2="191.5" y1="61.50" y2="61.50" stroke="#142214" stroke-width="1"/><line x1="0" x2="191.5" y1="52.50" y2="52.50" stroke="#142214" stroke-width="1"/><line x1="0" x2="191.5" y1="47.50" y2="47.50" stroke="#142214" stroke-width="1"/><line x1="0" x2="191.5" y1="42.50" y2="42.50" stroke="#142214" stroke-width="1"/><line x1="0" x2="191.5" y1="33.50" y2="33.50" stroke="#142214" stroke-width="1"/><line x1="0" x2="191.5" y1="28.50" y2="28.50" stroke="#142214" stroke-width="1"/><line x1="0" x2="191.5" y1="24.50" y2="24.50" stroke="#142214" stroke-width="1"/><line x1="0" x2="191.5" y1="14.50" y2="14.50" stroke="#142214" stroke-width="1"/><line x1="0" x2="191.5" y1="9.50" y2="9.50" stroke="#142214" stroke-width="1"/><line x1="0" x2="191.5" y1="5.50" y2="5.50" stroke="#142214" stroke-width="1"/><line x1="0" x2="191.5" y1="-4.50" y2="-4.50" stroke="#142214" stroke-width="1"/><line y1="0" y2="320.5" x1="4.50" x2="4.50" stroke="#142214" stroke-width="1"/><line y1="0" y2="320.5" x1="7.50" x2="7.50" stroke="#142214" stroke-width="1"/><line y1="0" y2="320.5" x1="11.50" x2="11.50" stroke="#142214" stroke-width="1"/><line y1="0" y2="320.5" x1="15.50" x2="15.50" stroke="#142214" stroke-width="1"/><line y1="0" y2="320.5" x1="22.50" x2="22.50" stroke="#142214" stroke-width="1"/><line y1="0" y2="320.5" x1="25.50" x2="25.50" stroke="#142214" stroke-width="1"/><line y1="0" y2="320.5" x1="29.50" x2="29.50" stroke="#142214" stroke-width="1"/><line y1="0" y2="320.5" x1="33.50" x2="33.50" stroke="#142214" stroke-width="1"/><line y1="0" y2="320.5" x1="40.50" x2="40.50" stroke="#142214" stroke-width="1"/><line y1="0" y2="320.5" x1="43.50" x2="43.50" stroke="#142214" stroke-width="1"/><line y1="0" y2="320.5" x1="47.50" x2="47.50" stroke="#142214" stroke-width="1"/><line y1="0" y2="320.5" x1="51.50" x2="51.50" stroke="#142214" stroke-width="1"/><line y1="0" y2="320.5" x1="58.50" x2="58.50" stroke="#142214" stroke-width="1"/><line y1="0" y2="320.5" x1="61.50" x2="61.50" stroke="#142214" stroke-width="1"/><line y1="0" y2="320.5" x1="65.50" x2="65.50" stroke="#142214" stroke-width="1"/><line y1="0" y2="320.5" x1="69.50" x2="69.50" stroke="#142214" stroke-width="1"/><line y1="0" y2="320.5" x1="76.50" x2="76.50" stroke="#142214" stroke-width="1"/><line y1="0" y2="320.5" x1="80.50" x2="80.50" stroke="#142214" stroke-width="1"/><line y1="0" y2="320.5" x1="83.50" x2="83.50" stroke="#142214" stroke-width="1"/><line y1="0" y2="320.5" x1="87.50" x2="87.50" stroke="#142214" stroke-width="1"/><line y1="0" y2="320.5" x1="94.50" x2="94.50" stroke="#142214" stroke-width="1"/><line y1="0" y2="320.5" x1="98.50" x2="98.50" stroke="#142214" stroke-width="1"/><line y1="0" y2="320.5" x1="101.50" x2="101.50" stroke="#142214" stroke-width="1"/><line y1="0" y2="320.5" x1="105.50" x2="105.50" stroke="#142214" stroke-width="1"/><line y1="0" y2="320.5" x1="112.50" x2="112.50" stroke="#142214" stroke-width="1"/><line y1="0" y2="320.5" x1="116.50" x2="116.50" stroke="#142214" stroke-width="1"/><line y1="0" y2="320.5" x1="119.50" x2="119.50" stroke="#142214" stroke-width="1"/><line y1="0" y2="320.5" x1="123.50" x2="123.50" stroke="#142214" stroke-width="1"/><line y1="0" y2="320.5" x1="130.50" x2="130.50" stroke="#142214" stroke-width="1"/><line y1="0" y2="320.5" x1="134.50" x2="134.50" stroke="#142214" stroke-width="1"/><line y1="0" y2="320.5" x1="137.50" x2="137.50" stroke="#142214" stroke-width="1"/><line y1="0" y2="320.5" x1="141.50" x2="141.50" stroke="#142214" stroke-width="1"/><line y1="0" y2="320.5" x1="148.50" x2="148.50" stroke="#142214" stroke-width="1"/><line y1="0" y2="320.5" x1="152.50" x2="152.50" stroke="#142214" stroke-width="1"/><line y1="0" y2="320.5" x1="155.50" x2="155.50" stroke="#142214" stroke-width="1"/><line y1="0" y2="320.5" x1="159.50" x2="159.50" stroke="#142214" stroke-width="1"/><line y1="0" y2="320.5" x1="166.50" x2="166.50" stroke="#142214" stroke-width="1"/><line y1="0" y2="320.5" x1="170.50" x2="170.50" stroke="#142214" stroke-width="1"/><line y1="0" y2="320.5" x1="173.50" x2="173.50" stroke="#142214" stroke-width="1"/><line y1="0" y2="320.5" x1="177.50" x2="177.50" stroke="#142214" stroke-width="1"/><line y1="0" y2="320.5" x1="184.50" x2="184.50" stroke="#142214" stroke-width="1"/><line y1="0" y2="320.5" x1="188.50" x2="188.50" stroke="#142214" stroke-width="1"/><line y1="0" y2="320.5" x1="191.50" x2="191.50" stroke="#142214" stroke-width="1"/><line y1="0" y2="320.5" x1="195.50" x2="195.50" stroke="#142214" stroke-width="1"/><line x1="0" x2="191.5" y1="301.50" y2="301.50" stroke="#1d4c1d" stroke-width="1"/><line x1="0" x2="191.5" y1="282.50" y2="282.50" stroke="#1d4c1d" stroke-width="1"/><line x1="0" x2="191.5" y1="264.50" y2="264.50" stroke="#1d4c1d" stroke-width="1"/><line x1="0" x2="191.5" y1="245.50" y2="245.50" stroke="#1d4c1d" stroke-width="1"/><line x1="0" x2="191.5" y1="226.50" y2="226.50" stroke="#1d4c1d" stroke-width="1"/><line x1="0" x2="191.5" y1="207.50" y2="207.50" stroke="#1d4c1d" stroke-width="1"/><line x1="0" x2="191.5" y1="188.50" y2="188.50" stroke="#1d4c1d" stroke-width="1"/><line x1="0" x2="191.5" y1="169.50" y2="169.50" stroke="#1d4c1d" stroke-width="1"/><line x1="0" x2="191.5" y1="151.50" y2="151.50" stroke="#1d4c1d" stroke-width="1"/><line x1="0" x2="191.5" y1="132.50" y2="132.50" stroke="#1d4c1d" stroke-width="1"/><line x1="0" x2="191.5" y1="113.50" y2="113.50" stroke="#1d4c1d" stroke-width="1"/><line x1="0" x2="191.5" y1="94.50" y2="94.50" stroke="#1d4c1d" stroke-width="1"/><line x1="0" x2="191.5" y1="75.50" y2="75.50" stroke="#1d4c1d" stroke-width="1"/><line x1="0" x2="191.5" y1="57.50" y2="57.50" stroke="#1d4c1d" stroke-width="1"/><line x1="0" x2="191.5" y1="38.50" y2="38.50" stroke="#1d4c1d" stroke-width="1"/><line x1="0" x2="191.5" y1="19.50" y2="19.50" stroke="#1d4c1d" stroke-width="1"/><line x1="0" x2="191.5" y1="0.50" y2="0.50" stroke="#1d4c1d" stroke-width="1"/><line y1="0" y2="320.5" x1="18.50" x2="18.50" stroke="#1d4c1d" stroke-width="1"/><line y1="0" y2="320.5" x1="36.50" x2="36.50" stroke="#1d4c1d" stroke-width="1"/><line y1="0" y2="320.5" x1="54.50" x2="54.50" stroke="#1d4c1d" stroke-width="1"/><line y1="0" y2="320.5" x1="72.50" x2="72.50" stroke="#1d4c1d" stroke-width="1"/><line y1="0" y2="320.5" x1="90.50" x2="90.50" stroke="#1d4c1d" stroke-width="1"/><line y1="0" y2="320.5" x1="108.50" x2="108.50" stroke="#1d4c1d" stroke-width="1"/><line y1="0" y2="320.5" x1="126.50" x2="126.50" stroke="#1d4c1d" stroke-width="1"/><line y1="0" y2="320.5" x1="145.50" x2="145.50" stroke="#1d4c1d" stroke-width="1"/><line y1="0" y2="320.5" x1="163.50" x2="163.50" stroke="#1d4c1d" stroke-width="1"/><line y1="0" y2="320.5" x1="181.50" x2="181.50" stroke="#1d4c1d" stroke-width="1"/><path d="M1.50 274.23V292.32M2.70 268.68V280.26M3.91 262.14V288.47M4.87 263.80V290.07M5.79 257.55V271.70M6.79 262.73V280.33M7.72 263.04V286.61M8.89 263.72V285.79M10.17 280.36V290.64M11.67 247.22V273.13M12.99 266.08V276.03M14.35 251.03V286.65M15.49 257.99V273.68M16.93 239.57V280.36M18.07 259.28V269.37M19.02 260.27V303.56M20.38 264.15V274.57M21.76 265.07V287.62M22.92 250.76V283.54M23.89 260.49V272.85M24.96 260.79V274.25M25.98 243.87V280.17M27.27 239.57V264.33M28.63 264.65V279.62M29.57 258.86V268.98M30.70 239.57V276.73M31.89 269.94V285.00M33.33 266.84V280.06M34.35 242.97V284.82M35.78 251.60V270.92M36.74 253.61V263.24M37.79 258.19V282.00M38.87 251.29V278.67M40.10 261.12V286.58M41.17 266.28V281.07M42.34 265.44V276.10M43.46 272.63V293.66M44.95 254.76V282.74M46.20 269.93V301.39M47.52 269.63V272.92M48.80 278.65V302.21M49.75 239.57V263.22M51.19 253.56V281.90M52.30 272.29V303.56M53.72 269.08V291.91M55.00 265.22V289.83M56.26 258.48V294.66M57.60 257.45V287.70M58.85 272.63V300.78M59.76 257.38V278.48M60.80 260.57V297.51M61.86 269.30V281.22M63.16 264.93V288.66M64.33 268.20V284.68M65.63 258.60V281.92M67.06 270.21V294.81M68.15 258.18V283.16M69.47 271.17V284.54M70.47 273.82V280.09M71.75 257.25V269.15M73.15 266.69V271.29M74.58 252.92V278.24M75.82 254.73V283.54M76.99 248.66V276.98M78.03 269.36V282.39M79.31 263.73V296.94M80.79 266.65V282.87M81.69 252.46V276.61M82.70 262.04V279.25M83.97 278.33V292.01M85.35 268.65V291.01M86.32 258.86V281.86M87.77 265.87V294.89M89.24 260.60V283.55M90.26 251.02V288.16M91.29 249.36V301.00M92.77 276.19V293.92M94.19 260.94V268.58M95.35 274.10V284.25M96.74 251.62V282.62M97.74 257.70V282.41M98.95 267.22V296.26M100.26 263.15V273.59M101.30 263.32V275.90M102.63 264.85V286.50M103.72 259.78V295.74M105.16 246.25V286.81M106.41 269.63V290.13M107.61 272.41V289.91M108.75 269.19V290.62M109.94 269.55V287.29M111.42 265.37V279.45M112.60 259.89V281.30M113.79 279.19V290.54M115.06 268.10V271.76M116.07 271.58V294.32M117.17 263.02V294.35M118.14 258.80V269.44M119.16 275.72V288.07M120.38 265.24V277.54M121.66 264.81V287.94M123.07 276.30V300.17M124.46 263.50V281.93M125.49 239.57V263.96M126.47 251.78V273.30M127.87 250.82V282.33M128.84 267.82V288.08M130.15 243.71V291.40M131.12 280.58V301.41M132.13 267.94V276.25M133.06 273.76V285.55M134.07 267.35V298.74M135.56 268.95V301.55M136.74 267.98V280.73M137.92 277.08V280.15M139.24 269.25V280.82M140.41 260.37V276.45M141.62 243.06V273.49M143.00 250.97V285.29M144.26 239.57V277.94M145.64 245.03V274.79M147.03 258.34V297.29M148.46 255.03V277.47M149.79 267.35V283.40M150.97 268.23V280.91M152.01 260.14V285.13M153.12 262.30V289.54M154.62 261.59V290.38M155.97 272.09V288.60M157.03 275.11V281.02M158.04 270.75V275.13M159.27 239.57V264.92M160.52 266.17V268.66M161.77 274.96V279.19M163.23 258.04V278.10M164.50 239.57V280.06M165.65 276.74V286.89M166.94 260.58V274.56M168.27 271.55V273.80M169.27 271.68V285.15M170.71 269.24V303.56M171.65 262.68V282.05M172.84 268.33V300.65M174.17 239.57V282.30M175.56 271.35V285.62M176.58 261.81V282.29M177.56 273.12V289.86M178.81 252.44V283.51M180.03 261.35V262.79M180.99 258.88V291.31M182.27 267.71V282.57M183.52 264.25V295.38M184.54 239.57V296.72M185.46 268.61V282.24M186.62 270.73V279.95M187.57 266.48V288.83M188.85 266.45V280.16M190.19 266.53V273.66M191.17 253.90V272.13" fill="none" stroke="#7a887a" stroke-width="0.9"/><path d="M1.50 282.10 L2.05 273.29 L2.76 283.83 L3.61 281.15 L4.36 266.77 L5.18 283.58 L5.67 272.70 L6.47 273.17 L7.14 274.60 L7.79 279.09 L8.55 282.83 L9.03 273.42 L9.51 264.13 L10.08 278.31 L10.64 289.15 L11.15 284.81 L11.75 265.65 L12.24 279.06 L13.06 286.91 L13.89 268.49 L14.66 280.98 L15.23 279.80 L16.05 268.48 L16.86 276.19 L17.46 268.25 L18.05 282.92 L18.58 271.16 L19.26 273.19 L20.04 286.38 L20.72 269.91 L21.52 263.48 L22.08 266.17 L22.75 274.85 L23.43 264.25 L24.20 278.85 L24.67 290.55 L25.16 280.60 L25.64 277.75 L26.12 294.35 L26.83 267.60 L27.54 265.26 L28.09 273.61 L28.74 262.10 L29.50 282.33 L30.34 271.54 L31.06 286.78 L31.80 275.85 L32.53 268.78 L33.31 280.71 L34.03 266.99 L34.81 288.48 L35.61 264.59 L36.27 279.45 L37.01 273.42 L37.63 284.66 L38.13 277.70 L38.73 295.09 L39.25 273.75 L39.82 267.73 L40.66 269.50 L41.15 273.63 L41.86 275.41 L42.34 281.53 L42.97 292.30 L43.43 285.62 L43.93 273.90 L44.47 270.84 L45.21 281.27 L45.73 279.66 L46.30 269.60 L46.87 263.67 L47.54 272.31 L48.09 285.10 L48.90 269.62 L49.57 280.25 L50.40 282.22 L50.87 275.62 L51.70 273.62 L52.36 284.19 L53.02 280.23 L53.73 250.87 L54.27 266.71 L54.87 275.62 L55.64 278.92 L56.16 287.53 L56.67 279.13 L57.47 270.37 L58.12 293.70 L58.68 295.09 L59.34 267.78 L59.79 264.48 L60.57 267.33 L61.05 289.22 L61.61 277.07 L62.25 280.02 L62.89 265.45 L63.69 279.38 L64.26 274.12 L65.07 284.80 L65.56 273.60 L66.23 281.41 L66.89 267.49 L67.46 262.90 L68.04 269.85 L68.67 272.95 L69.41 284.48 L69.90 266.31 L70.51 295.09 L71.29 271.01 L72.00 268.06 L72.74 275.63 L73.28 284.90 L73.74 279.95 L74.58 274.51 L75.28 281.76 L75.84 283.78 L76.41 268.86 L77.00 286.06 L77.55 268.41 L78.08 277.15 L78.91 283.79 L79.58 277.52 L80.37 283.77 L80.85 273.88 L81.57 273.35 L82.31 272.61 L83.09 268.50 L83.78 271.15 L84.29 273.02 L84.79 279.02 L85.61 274.46 L86.23 288.47 L86.99 277.16 L87.77 282.00 L88.38 271.28 L88.84 286.94 L89.68 268.60 L90.45 282.47 L90.90 286.08 L91.48 283.00 L91.98 265.99 L92.58 291.18 L93.36 277.15 L94.05 268.41 L94.86 264.16 L95.53 282.27 L96.04 268.30 L96.78 266.10 L97.51 277.12 L98.30 269.63 L99.00 256.99 L99.53 270.78 L100.21 273.10 L100.94 285.57 L101.53 259.15 L102.17 260.03 L102.67 260.23 L103.48 286.73 L104.16 279.20 L104.71 254.07 L105.49 290.49 L106.18 264.93 L106.74 265.26 L107.55 275.64 L108.34 265.23 L108.86 279.50 L109.32 277.27 L109.84 256.28 L110.56 277.91 L111.13 282.85 L111.73 288.47 L112.42 275.76 L112.95 277.72 L113.59 271.06 L114.26 269.72 L114.78 282.85 L115.46 277.09 L116.04 277.75 L116.76 278.10 L117.27 265.18 L117.91 279.17 L118.52 285.50 L119.28 285.36 L120.03 295.09 L120.81 273.83 L121.60 283.87 L122.28 271.38 L123.09 286.47 L123.72 277.95 L124.53 277.49 L125.27 273.71 L126.08 277.56 L126.83 287.63 L127.40 278.96 L127.90 278.06 L128.53 284.79 L129.00 276.41 L129.73 282.45 L130.30 277.30 L130.91 275.99 L131.72 273.10 L132.56 284.86 L133.18 290.94 L133.95 273.80 L134.63 262.46 L135.44 264.05 L135.94 267.56 L136.60 276.00 L137.15 276.36 L137.72 277.65 L138.53 273.56 L139.30 282.62 L139.99 271.49 L140.46 258.50 L141.03 272.75 L141.68 254.95 L142.32 285.67 L142.85 281.66 L143.66 257.88 L144.19 272.12 L144.83 283.01 L145.35 256.05 L145.88 295.09 L146.58 270.00 L147.05 259.99 L147.54 277.39 L148.35 283.53 L149.15 277.32 L149.88 280.71 L150.70 279.51 L151.24 275.11 L151.82 277.65 L152.34 281.70 L152.88 283.93 L153.48 289.14 L154.20 267.82 L154.74 283.78 L155.31 265.02 L155.87 281.85 L156.57 255.85 L157.20 263.32 L157.86 278.80 L158.55 276.77 L159.12 276.36 L159.60 261.00 L160.16 276.05 L160.73 282.63 L161.40 269.24 L162.24 259.64 L162.70 289.98 L163.31 272.90 L164.13 281.61 L164.80 276.27 L165.51 284.16 L166.27 266.69 L166.93 292.63 L167.65 276.85 L168.31 271.28 L169.07 277.84 L169.59 281.10 L170.22 280.17 L170.98 272.86 L171.52 290.87 L172.17 274.27 L172.81 265.30 L173.28 287.28 L173.96 283.94 L174.76 274.20 L175.21 271.88 L175.86 284.66 L176.42 272.62 L177.19 259.69 L177.86 268.14 L178.53 274.66 L179.04 282.30 L179.62 269.17 L180.31 274.34 L180.97 277.32 L181.46 265.03 L182.24 273.20 L182.75 270.55 L183.48 269.03 L183.95 289.28 L184.57 280.17 L185.40 271.82 L185.87 290.58 L186.72 275.33 L187.22 289.72 L187.69 272.39 L188.24 272.67 L188.84 279.25 L189.41 279.28 L189.88 274.73 L190.72 275.12 L191.27 290.01" fill="none" stroke="#f6f6f6" stroke-width="1.0"/><line x1="63.50" x2="63.50" y1="42.90" y2="264.04" stroke="#a4a4a4" stroke-width="1"/><line x1="63.50" x2="63.50" y1="155.83" y2="264.04" stroke="#f0f0f0" stroke-width="1.2"/><line x1="126.50" x2="126.50" y1="15.62" y2="264.04" stroke="#a4a4a4" stroke-width="1"/><line x1="126.50" x2="126.50" y1="141.71" y2="264.04" stroke="#f0f0f0" stroke-width="1.2"/><line x1="1" x2="1" y1="0" y2="320.5" stroke="#cfcf90" stroke-width="1.1"/><rect x="1" y="256.5" width="1.8" height="45.2" fill="#9a9a66"/></svg>
<div class="t" style="left:351.50px;width:30px;text-align:right;top:386.07px;font-size:7.8px;line-height:8.962px;color:#1e1e1e;">0</div>
<div class="a" style="left:382px;top:390px;width:3.5px;height:1px;background:#333;"></div>
<div class="t" style="left:351.50px;width:30px;text-align:right;top:367.25px;font-size:7.8px;line-height:8.962px;color:#1e1e1e;">0,2</div>
<div class="a" style="left:382px;top:371px;width:3.5px;height:1px;background:#333;"></div>
<div class="t" style="left:351.50px;width:30px;text-align:right;top:348.43px;font-size:7.8px;line-height:8.962px;color:#1e1e1e;">0,4</div>
<div class="a" style="left:382px;top:352px;width:3.5px;height:1px;background:#333;"></div>
<div class="t" style="left:351.50px;width:30px;text-align:right;top:329.61px;font-size:7.8px;line-height:8.962px;color:#1e1e1e;">0,6</div>
<div class="a" style="left:382px;top:334px;width:3.5px;height:1px;background:#333;"></div>
<div class="t" style="left:351.50px;width:30px;text-align:right;top:310.79px;font-size:7.8px;line-height:8.962px;color:#1e1e1e;">0,8</div>
<div class="a" style="left:382px;top:315px;width:3.5px;height:1px;background:#333;"></div>
<div class="t" style="left:351.50px;width:30px;text-align:right;top:291.97px;font-size:7.8px;line-height:8.962px;color:#1e1e1e;">1</div>
<div class="a" style="left:382px;top:296px;width:3.5px;height:1px;background:#333;"></div>
<div class="t" style="left:351.50px;width:30px;text-align:right;top:273.15px;font-size:7.8px;line-height:8.962px;color:#1e1e1e;">1,2</div>
<div class="a" style="left:382px;top:277px;width:3.5px;height:1px;background:#333;"></div>
<div class="t" style="left:351.50px;width:30px;text-align:right;top:254.33px;font-size:7.8px;line-height:8.962px;color:#1e1e1e;">1,4</div>
<div class="a" style="left:382px;top:258px;width:3.5px;height:1px;background:#333;"></div>
<div class="t" style="left:351.50px;width:30px;text-align:right;top:235.51px;font-size:7.8px;line-height:8.962px;color:#1e1e1e;">1,6</div>
<div class="a" style="left:382px;top:239px;width:3.5px;height:1px;background:#333;"></div>
<div class="t" style="left:351.50px;width:30px;text-align:right;top:216.69px;font-size:7.8px;line-height:8.962px;color:#1e1e1e;">1,8</div>
<div class="a" style="left:382px;top:221px;width:3.5px;height:1px;background:#333;"></div>
<div class="t" style="left:351.50px;width:30px;text-align:right;top:197.87px;font-size:7.8px;line-height:8.962px;color:#1e1e1e;">2</div>
<div class="a" style="left:382px;top:202px;width:3.5px;height:1px;background:#333;"></div>
<div class="t" style="left:351.50px;width:30px;text-align:right;top:179.05px;font-size:7.8px;line-height:8.962px;color:#1e1e1e;">2,2</div>
<div class="a" style="left:382px;top:183px;width:3.5px;height:1px;background:#333;"></div>
<div class="t" style="left:351.50px;width:30px;text-align:right;top:160.23px;font-size:7.8px;line-height:8.962px;color:#1e1e1e;">2,4</div>
<div class="a" style="left:382px;top:164px;width:3.5px;height:1px;background:#333;"></div>
<div class="t" style="left:351.50px;width:30px;text-align:right;top:141.41px;font-size:7.8px;line-height:8.962px;color:#1e1e1e;">2,6</div>
<div class="a" style="left:382px;top:145px;width:3.5px;height:1px;background:#333;"></div>
<div class="t" style="left:351.50px;width:30px;text-align:right;top:122.59px;font-size:7.8px;line-height:8.962px;color:#1e1e1e;">2,8</div>
<div class="a" style="left:382px;top:127px;width:3.5px;height:1px;background:#333;"></div>
<div class="t" style="left:351.50px;width:30px;text-align:right;top:103.77px;font-size:7.8px;line-height:8.962px;color:#1e1e1e;">3</div>
<div class="a" style="left:382px;top:108px;width:3.5px;height:1px;background:#333;"></div>
<div class="t" style="left:351.50px;width:30px;text-align:right;top:84.95px;font-size:7.8px;line-height:8.962px;color:#1e1e1e;">3,2</div>
<div class="a" style="left:382px;top:89px;width:3.5px;height:1px;background:#333;"></div>
<div class="t" style="left:351.50px;width:30px;text-align:right;top:66.13px;font-size:7.8px;line-height:8.962px;color:#1e1e1e;">3,4</div>
<div class="a" style="left:382px;top:70px;width:3.5px;height:1px;background:#333;"></div>
<div class="t" style="left:376.60px;width:20px;text-align:center;top:394.83px;font-size:7.7px;line-height:8.847px;color:#1e1e1e;">0</div>
<div class="a" style="left:387px;top:391px;width:1px;height:3px;background:#333;"></div>
<div class="t" style="left:394.65px;width:20px;text-align:center;top:394.83px;font-size:7.7px;line-height:8.847px;color:#1e1e1e;">1</div>
<div class="a" style="left:405px;top:391px;width:1px;height:3px;background:#333;"></div>
<div class="t" style="left:412.70px;width:20px;text-align:center;top:394.83px;font-size:7.7px;line-height:8.847px;color:#1e1e1e;">2</div>
<div class="a" style="left:423px;top:391px;width:1px;height:3px;background:#333;"></div>
<div class="t" style="left:430.75px;width:20px;text-align:center;top:394.83px;font-size:7.7px;line-height:8.847px;color:#1e1e1e;">3</div>
<div class="a" style="left:441px;top:391px;width:1px;height:3px;background:#333;"></div>
<div class="t" style="left:448.80px;width:20px;text-align:center;top:394.83px;font-size:7.7px;line-height:8.847px;color:#1e1e1e;">4</div>
<div class="a" style="left:459px;top:391px;width:1px;height:3px;background:#333;"></div>
<div class="t" style="left:466.85px;width:20px;text-align:center;top:394.83px;font-size:7.7px;line-height:8.847px;color:#1e1e1e;">5</div>
<div class="a" style="left:477px;top:391px;width:1px;height:3px;background:#333;"></div>
<div class="t" style="left:484.90px;width:20px;text-align:center;top:394.83px;font-size:7.7px;line-height:8.847px;color:#1e1e1e;">6</div>
<div class="a" style="left:495px;top:391px;width:1px;height:3px;background:#333;"></div>
<div class="t" style="left:502.95px;width:20px;text-align:center;top:394.83px;font-size:7.7px;line-height:8.847px;color:#1e1e1e;">7</div>
<div class="a" style="left:513px;top:391px;width:1px;height:3px;background:#333;"></div>
<div class="t" style="left:521.00px;width:20px;text-align:center;top:394.83px;font-size:7.7px;line-height:8.847px;color:#1e1e1e;">8</div>
<div class="a" style="left:531px;top:391px;width:1px;height:3px;background:#333;"></div>
<div class="t" style="left:539.05px;width:20px;text-align:center;top:394.83px;font-size:7.7px;line-height:8.847px;color:#1e1e1e;">9</div>
<div class="a" style="left:549px;top:391px;width:1px;height:3px;background:#333;"></div>
<div class="t" style="left:557.10px;width:20px;text-align:center;top:394.83px;font-size:7.7px;line-height:8.847px;color:#1e1e1e;">10</div>
<div class="a" style="left:567px;top:391px;width:1px;height:3px;background:#333;"></div>
<div class="t" style="left:265.30px;top:226.78px;width:200px;text-align:center;font-size:6.7px;line-height:8.04px;color:#1e1e1e;transform:rotate(-90deg);transform-origin:100px 4.02px;">Acceleration [m/s&#178;]</div>
<div class="a" style="left:344.7px;top:413.8px;width:150.5px;height:34.6px;background:#c2c2c2;box-sizing:border-box;border-top:1px solid #dadada;border-left:1px solid #dadada;border-bottom:1px solid #8a8a8a;border-right:1px solid #8a8a8a;"></div>
<div class="a" style="left:353.4px;top:418.4px;width:17.1px;height:9.9px;background:#f6f6f6;box-sizing:border-box;border-top:1px solid #9a9a9a;border-left:1px solid #9a9a9a;border-bottom:1px solid #e0e0e0;border-right:1px solid #e0e0e0;"></div>
<div class="t" style="left:355.00px;top:419.99px;font-size:6.8px;line-height:7.813px;color:#1e1e1e;">C1</div>
<div class="a" style="left:373.8px;top:418.4px;width:29px;height:9.9px;background:#f6f6f6;box-sizing:border-box;border-top:1px solid #9a9a9a;border-left:1px solid #9a9a9a;border-bottom:1px solid #e0e0e0;border-right:1px solid #e0e0e0;overflow:hidden;"></div>
<div class="t" style="left:375.20px;top:419.99px;font-size:6.8px;line-height:7.813px;color:#1e1e1e;">32,2513</div>
<div class="a" style="left:406.3px;top:418.4px;width:40.3px;height:9.9px;background:#f6f6f6;box-sizing:border-box;border-top:1px solid #9a9a9a;border-left:1px solid #9a9a9a;border-bottom:1px solid #e0e0e0;border-right:1px solid #e0e0e0;"></div>
<div class="t" style="left:407.60px;top:419.99px;font-size:6.8px;line-height:7.813px;color:#1e1e1e;">NaN</div>
<div class="a" style="left:448.8px;top:417.9px;width:11.8px;height:10.9px;background:#d4d4d4;box-sizing:border-box;border-top:1px solid #eeeeee;border-left:1px solid #eeeeee;border-bottom:1px solid #8a8a8a;border-right:1px solid #8a8a8a;"></div>
<svg class="a" style="left:448.8px;top:417.9px;" width="11.8" height="10.9" viewBox="0 0 11.8 10.9"><path d="M5.9 1.8 V9.2 M2 5.5 H9.8" stroke="#222" stroke-width="0.9"/><path d="M5.9 1.3 L4.6 3 H7.2 Z M5.9 9.7 L4.6 8 H7.2 Z M1.5 5.5 L3.2 4.2 V6.8 Z M10.3 5.5 L8.6 4.2 V6.8 Z" fill="#222"/><circle cx="2" cy="1.8" r="0.9" fill="#4c4"/></svg>
<div class="a" style="left:462px;top:417.9px;width:12.5px;height:10.9px;background:#c8c8c8;box-sizing:border-box;border-top:1px solid #eeeeee;border-left:1px solid #eeeeee;border-bottom:1px solid #8a8a8a;border-right:1px solid #8a8a8a;"></div>
<div class="a" style="left:463px;top:418.9px;width:10.5px;height:8.9px;background:#111;"></div>
<svg class="a" style="left:463px;top:418.9px;" width="10.5" height="8.9" viewBox="0 0 10.5 8.9"><path d="M0.5 4.45 H10 M5.25 0.5 V8.4" stroke="#d8d800" stroke-width="1.2"/><rect x="2.2" y="2" width="6" height="4.9" fill="none" stroke="#b8b800" stroke-width="0.8"/></svg>
<div class="a" style="left:475.5px;top:417.9px;width:12px;height:10.9px;background:#d0d0d0;box-sizing:border-box;border-top:1px solid #eeeeee;border-left:1px solid #eeeeee;border-bottom:1px solid #8a8a8a;border-right:1px solid #8a8a8a;"></div>
<svg class="a" style="left:475.5px;top:417.9px;" width="12" height="10.9" viewBox="0 0 12 10.9"><path d="M2.5 5 V3.6 A1.7 1.7 0 0 1 5.9 3.6 V5" fill="none" stroke="#222" stroke-width="0.8"/><rect x="2" y="5" width="4.4" height="3.6" fill="#222"/><path d="M8 5 L10.6 5 L9.3 6.6 Z" fill="#222"/></svg>
<div class="a" style="left:353.4px;top:434.2px;width:17.1px;height:9.9px;background:#f6f6f6;box-sizing:border-box;border-top:1px solid #9a9a9a;border-left:1px solid #9a9a9a;border-bottom:1px solid #e0e0e0;border-right:1px solid #e0e0e0;"></div>
<div class="t" style="left:355.00px;top:435.79px;font-size:6.8px;line-height:7.813px;color:#1e1e1e;">C2</div>
<div class="a" style="left:373.8px;top:434.2px;width:29px;height:9.9px;background:#f6f6f6;box-sizing:border-box;border-top:1px solid #9a9a9a;border-left:1px solid #9a9a9a;border-bottom:1px solid #e0e0e0;border-right:1px solid #e0e0e0;overflow:hidden;"></div>
<div class="t" style="left:375.20px;top:435.79px;font-size:6.8px;line-height:7.813px;color:#1e1e1e;">0,06666&#8201;</div>
<div class="a" style="left:406.3px;top:434.2px;width:40.3px;height:9.9px;background:#f6f6f6;box-sizing:border-box;border-top:1px solid #9a9a9a;border-left:1px solid #9a9a9a;border-bottom:1px solid #e0e0e0;border-right:1px solid #e0e0e0;"></div>
<div class="t" style="left:407.60px;top:435.79px;font-size:6.8px;line-height:7.813px;color:#1e1e1e;">NaN</div>
<div class="a" style="left:448.8px;top:433.7px;width:11.8px;height:10.9px;background:#d4d4d4;box-sizing:border-box;border-top:1px solid #eeeeee;border-left:1px solid #eeeeee;border-bottom:1px solid #8a8a8a;border-right:1px solid #8a8a8a;"></div>
<svg class="a" style="left:448.8px;top:433.7px;" width="11.8" height="10.9" viewBox="0 0 11.8 10.9"><path d="M5.9 1.8 V9.2 M2 5.5 H9.8" stroke="#222" stroke-width="0.9"/><path d="M5.9 1.3 L4.6 3 H7.2 Z M5.9 9.7 L4.6 8 H7.2 Z M1.5 5.5 L3.2 4.2 V6.8 Z M10.3 5.5 L8.6 4.2 V6.8 Z" fill="#222"/><circle cx="2" cy="1.8" r="0.9" fill="#4c4"/></svg>
<div class="a" style="left:462px;top:433.7px;width:12.5px;height:10.9px;background:#c8c8c8;box-sizing:border-box;border-top:1px solid #eeeeee;border-left:1px solid #eeeeee;border-bottom:1px solid #8a8a8a;border-right:1px solid #8a8a8a;"></div>
<div class="a" style="left:463px;top:434.7px;width:10.5px;height:8.9px;background:#111;"></div>
<svg class="a" style="left:463px;top:434.7px;" width="10.5" height="8.9" viewBox="0 0 10.5 8.9"><path d="M0.5 4.45 H10 M5.25 0.5 V8.4" stroke="#d8d800" stroke-width="1.2"/><rect x="2.2" y="2" width="6" height="4.9" fill="none" stroke="#b8b800" stroke-width="0.8"/></svg>
<div class="a" style="left:475.5px;top:433.7px;width:12px;height:10.9px;background:#d0d0d0;box-sizing:border-box;border-top:1px solid #eeeeee;border-left:1px solid #eeeeee;border-bottom:1px solid #8a8a8a;border-right:1px solid #8a8a8a;"></div>
<svg class="a" style="left:475.5px;top:433.7px;" width="12" height="10.9" viewBox="0 0 12 10.9"><path d="M2.5 5 V3.6 A1.7 1.7 0 0 1 5.9 3.6 V5" fill="none" stroke="#222" stroke-width="0.8"/><rect x="2" y="5" width="4.4" height="3.6" fill="#222"/><path d="M8 5 L10.6 5 L9.3 6.6 Z" fill="#222"/></svg>
<div class="a" style="left:575px;top:94px;width:1px;height:250px;background:#8a8a8a;"></div>
<div class="a" style="left:577px;top:23px;width:1px;height:432px;background:#f2f2f2;"></div>
</body></html>
